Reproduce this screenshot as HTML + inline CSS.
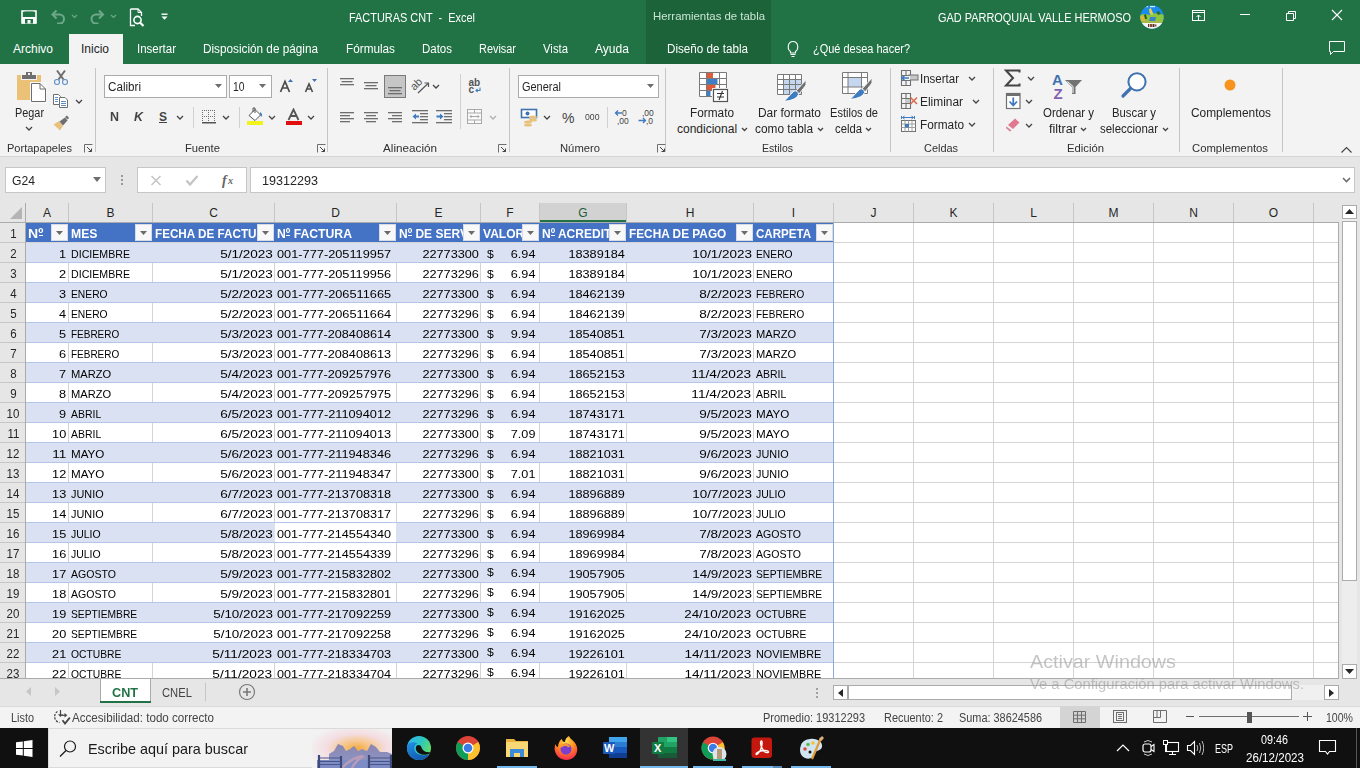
<!DOCTYPE html>
<html><head><meta charset="utf-8"><style>
html,body{margin:0;padding:0;}
body{width:1360px;height:768px;overflow:hidden;position:relative;background:#e6e6e6;font-family:"Liberation Sans",sans-serif;}
body div, body svg{position:absolute;}
</style></head><body>
<div style="left:0px;top:0px;width:1360px;height:64px;background:#217346"></div>
<div style="left:646px;top:0px;width:125px;height:64px;background:#1d6339"></div>
<div style="left:69px;top:34px;width:54px;height:30px;background:#f3f3f3"></div>
<div style="left:349.00px;top:10.84px;font-size:12px;line-height:14px;color:#ffffff;white-space:pre;font-family:'Liberation Sans', sans-serif;transform:scaleX(0.9100);transform-origin:left top;">FACTURAS CNT  -  Excel</div>
<div style="left:653.00px;top:9.69px;font-size:11px;line-height:13px;color:#c8e6d2;white-space:pre;font-family:'Liberation Sans', sans-serif;transform:scaleX(1.0349);transform-origin:left top;">Herramientas de tabla</div>
<div style="left:938.00px;top:10.84px;font-size:12px;line-height:14px;color:#ffffff;white-space:pre;font-family:'Liberation Sans', sans-serif;transform:scaleX(0.9111);transform-origin:left top;">GAD PARROQUIAL VALLE HERMOSO</div>
<div style="left:13.00px;top:41.84px;font-size:12px;line-height:14px;color:#ffffff;white-space:pre;font-family:'Liberation Sans', sans-serif;">Archivo</div>
<div style="left:137.00px;top:41.84px;font-size:12px;line-height:14px;color:#ffffff;white-space:pre;font-family:'Liberation Sans', sans-serif;transform:scaleX(0.9587);transform-origin:left top;">Insertar</div>
<div style="left:203.00px;top:41.84px;font-size:12px;line-height:14px;color:#ffffff;white-space:pre;font-family:'Liberation Sans', sans-serif;transform:scaleX(0.9795);transform-origin:left top;">Disposición de página</div>
<div style="left:346.00px;top:41.84px;font-size:12px;line-height:14px;color:#ffffff;white-space:pre;font-family:'Liberation Sans', sans-serif;transform:scaleX(0.9798);transform-origin:left top;">Fórmulas</div>
<div style="left:422.00px;top:41.84px;font-size:12px;line-height:14px;color:#ffffff;white-space:pre;font-family:'Liberation Sans', sans-serif;transform:scaleX(0.9570);transform-origin:left top;">Datos</div>
<div style="left:479.00px;top:41.84px;font-size:12px;line-height:14px;color:#ffffff;white-space:pre;font-family:'Liberation Sans', sans-serif;transform:scaleX(0.9096);transform-origin:left top;">Revisar</div>
<div style="left:543.00px;top:41.84px;font-size:12px;line-height:14px;color:#ffffff;white-space:pre;font-family:'Liberation Sans', sans-serif;transform:scaleX(0.9448);transform-origin:left top;">Vista</div>
<div style="left:595.00px;top:41.84px;font-size:12px;line-height:14px;color:#ffffff;white-space:pre;font-family:'Liberation Sans', sans-serif;transform:scaleX(1.0057);transform-origin:left top;">Ayuda</div>
<div style="left:667.00px;top:41.84px;font-size:12px;line-height:14px;color:#ffffff;white-space:pre;font-family:'Liberation Sans', sans-serif;transform:scaleX(0.9713);transform-origin:left top;">Diseño de tabla</div>
<div style="left:813.00px;top:41.84px;font-size:12px;line-height:14px;color:#ffffff;white-space:pre;font-family:'Liberation Sans', sans-serif;transform:scaleX(0.9145);transform-origin:left top;">¿Qué desea hacer?</div>
<div style="left:81.00px;top:41.84px;font-size:12px;line-height:14px;color:#262626;white-space:pre;font-family:'Liberation Sans', sans-serif;">Inicio</div>
<div style="left:0px;top:64px;width:1360px;height:92px;background:#f3f3f3"></div>
<div style="left:0px;top:156px;width:1360px;height:1px;background:#d6d6d6"></div>
<div style="left:95px;top:68px;width:1px;height:84px;background:#c6c6c6"></div>
<div style="left:327px;top:68px;width:1px;height:84px;background:#c6c6c6"></div>
<div style="left:509px;top:68px;width:1px;height:84px;background:#c6c6c6"></div>
<div style="left:665px;top:68px;width:1px;height:84px;background:#c6c6c6"></div>
<div style="left:890px;top:68px;width:1px;height:84px;background:#c6c6c6"></div>
<div style="left:993px;top:68px;width:1px;height:84px;background:#c6c6c6"></div>
<div style="left:1179px;top:68px;width:1px;height:84px;background:#c6c6c6"></div>
<div style="left:1282px;top:68px;width:1px;height:84px;background:#c6c6c6"></div>
<div style="left:7.00px;top:141.02px;font-size:11.5px;line-height:14px;color:#303030;white-space:pre;font-family:'Liberation Sans', sans-serif;transform:scaleX(0.9591);transform-origin:left top;">Portapapeles</div>
<div style="left:185.00px;top:141.02px;font-size:11.5px;line-height:14px;color:#303030;white-space:pre;font-family:'Liberation Sans', sans-serif;transform:scaleX(0.9776);transform-origin:left top;">Fuente</div>
<div style="left:383.00px;top:141.02px;font-size:11.5px;line-height:14px;color:#303030;white-space:pre;font-family:'Liberation Sans', sans-serif;transform:scaleX(1.0176);transform-origin:left top;">Alineación</div>
<div style="left:560.00px;top:141.02px;font-size:11.5px;line-height:14px;color:#303030;white-space:pre;font-family:'Liberation Sans', sans-serif;transform:scaleX(0.9780);transform-origin:left top;">Número</div>
<div style="left:762.00px;top:141.02px;font-size:11.5px;line-height:14px;color:#303030;white-space:pre;font-family:'Liberation Sans', sans-serif;transform:scaleX(0.9152);transform-origin:left top;">Estilos</div>
<div style="left:924.00px;top:141.02px;font-size:11.5px;line-height:14px;color:#303030;white-space:pre;font-family:'Liberation Sans', sans-serif;transform:scaleX(0.9498);transform-origin:left top;">Celdas</div>
<div style="left:1067.00px;top:141.02px;font-size:11.5px;line-height:14px;color:#303030;white-space:pre;font-family:'Liberation Sans', sans-serif;transform:scaleX(0.9810);transform-origin:left top;">Edición</div>
<div style="left:1192.00px;top:141.02px;font-size:11.5px;line-height:14px;color:#303030;white-space:pre;font-family:'Liberation Sans', sans-serif;transform:scaleX(0.9827);transform-origin:left top;">Complementos</div>
<svg style="left:15px;top:70px;" width="34" height="34" viewBox="0 0 34 34">
<rect x="2" y="5" width="24" height="25" fill="#ebc177"/>
<rect x="6" y="4" width="16" height="6" fill="#f3f3f3"/>
<rect x="7" y="5" width="14" height="4" fill="#6f6f6f"/>
<rect x="11" y="2" width="6" height="3" fill="#6f6f6f"/>
<rect x="13" y="3" width="2" height="2" fill="#f3f3f3"/>
<rect x="15" y="12" width="17" height="22" fill="#f7f7f7"/>
<path d="M16.5 13.5 H25 L30.5 19 V31.5 H16.5 Z" fill="#ffffff" stroke="#6d6d6d" stroke-width="1"/>
<path d="M25 13.5 V19 H30.5" fill="none" stroke="#6d6d6d" stroke-width="1"/>
</svg>
<div style="left:15.00px;top:105.84px;font-size:12px;line-height:14px;color:#262626;white-space:pre;font-family:'Liberation Sans', sans-serif;transform:scaleX(0.9056);transform-origin:left top;">Pegar</div>
<svg style="left:25px;top:126px;" width="8" height="5" viewBox="0 0 8 5"><path d="M1 1 L4.0 4 L7 1" fill="none" stroke="#444444" stroke-width="1.3"/></svg>
<svg style="left:52px;top:68px;" width="18" height="18" viewBox="0 0 18 18">
<path d="M5 2.5 L11.5 11.5 M13 2.5 L6.5 11.5" stroke="#6e6e6e" stroke-width="2"/>
<circle cx="5" cy="14" r="2.5" fill="#f3f3f3" stroke="#5b8fc9" stroke-width="1.1"/>
<circle cx="13" cy="14" r="2.5" fill="#f3f3f3" stroke="#5b8fc9" stroke-width="1.1"/>
</svg>
<svg style="left:52px;top:93px;" width="18" height="17" viewBox="0 0 18 17">
<path d="M1.5 1.5 H6.5 L8.5 3.5 V11.5 H1.5 Z" fill="#ffffff" stroke="#6e6e6e" stroke-width="1"/>
<path d="M3 4.5 H6 M3 6.5 H6 M3 8.5 H6" stroke="#5b8fc9" stroke-width="1"/>
<path d="M7.5 4.5 H13 L15.5 7 V14.5 H7.5 Z" fill="#ffffff" stroke="#6e6e6e" stroke-width="1"/>
<path d="M9 8.5 H14 M9 10.5 H14 M9 12.5 H14" stroke="#5b8fc9" stroke-width="1"/>
</svg>
<svg style="left:75px;top:99px;" width="8" height="5" viewBox="0 0 8 5"><path d="M1 1 L4.0 4 L7 1" fill="none" stroke="#444444" stroke-width="1.3"/></svg>
<svg style="left:52px;top:115px;" width="18" height="18" viewBox="0 0 18 18">
<path d="M1.5 9.5 L7 6 L11 11 L8 15.5 Z" fill="#e8c27c"/>
<path d="M7.5 6.5 L13 2.5 L15.5 5.5 L11 10.5 Z" fill="#6e6e6e"/>
<path d="M13 2 L15 0.5 L17 3 L15.5 4.5 Z" fill="#6e6e6e"/>
</svg>
<svg style="left:84px;top:144px;" width="9" height="9" viewBox="0 0 9 9"><path d="M0.5 8.5 V0.5 H8.5" fill="none" stroke="#6e6e6e" stroke-width="1"/><path d="M3 3 L7.5 7.5 M4.5 7.5 H7.5 V4.5" fill="none" stroke="#444" stroke-width="1"/></svg>
<svg style="left:317px;top:144px;" width="9" height="9" viewBox="0 0 9 9"><path d="M0.5 8.5 V0.5 H8.5" fill="none" stroke="#6e6e6e" stroke-width="1"/><path d="M3 3 L7.5 7.5 M4.5 7.5 H7.5 V4.5" fill="none" stroke="#444" stroke-width="1"/></svg>
<svg style="left:498px;top:144px;" width="9" height="9" viewBox="0 0 9 9"><path d="M0.5 8.5 V0.5 H8.5" fill="none" stroke="#6e6e6e" stroke-width="1"/><path d="M3 3 L7.5 7.5 M4.5 7.5 H7.5 V4.5" fill="none" stroke="#444" stroke-width="1"/></svg>
<svg style="left:657px;top:144px;" width="9" height="9" viewBox="0 0 9 9"><path d="M0.5 8.5 V0.5 H8.5" fill="none" stroke="#6e6e6e" stroke-width="1"/><path d="M3 3 L7.5 7.5 M4.5 7.5 H7.5 V4.5" fill="none" stroke="#444" stroke-width="1"/></svg>
<div style="left:104px;top:75px;width:123px;height:23px;background:#ffffff;border:1px solid #ababab;box-sizing:border-box"></div>
<div style="left:108.00px;top:79.84px;font-size:12px;line-height:14px;color:#262626;white-space:pre;font-family:'Liberation Sans', sans-serif;transform:scaleX(0.9704);transform-origin:left top;">Calibri</div>
<svg style="left:215px;top:84px;" width="7" height="4" viewBox="0 0 7 4"><path d="M0 0 H7 L3.5 4 Z" fill="#6e6e6e"/></svg>
<div style="left:229px;top:75px;width:43px;height:23px;background:#ffffff;border:1px solid #ababab;box-sizing:border-box"></div>
<div style="left:233.00px;top:79.84px;font-size:12px;line-height:14px;color:#262626;white-space:pre;font-family:'Liberation Sans', sans-serif;transform:scaleX(0.8616);transform-origin:left top;">10</div>
<svg style="left:259px;top:84px;" width="7" height="4" viewBox="0 0 7 4"><path d="M0 0 H7 L3.5 4 Z" fill="#6e6e6e"/></svg>
<svg style="left:278px;top:77px;" width="18" height="17" viewBox="0 0 18 17">
<path d="M2.5 15 L7 4.5 L11.5 15 M4.2 11 H9.8" fill="none" stroke="#4a4a4a" stroke-width="1.7"/>
<path d="M10 5 L12.5 2 L15 5 Z" fill="#3f6fb0"/>
</svg>
<svg style="left:303px;top:77px;" width="18" height="17" viewBox="0 0 18 17">
<path d="M2.5 15 L6 7 L9.5 15 M3.8 12 H8.2" fill="none" stroke="#4a4a4a" stroke-width="1.6"/>
<path d="M9 2 H14 L11.5 5 Z" fill="#3f6fb0"/>
</svg>
<div style="left:110.00px;top:109.84px;font-size:12px;line-height:14px;color:#444444;font-weight:bold;white-space:pre;font-family:'Liberation Sans', sans-serif;transform:scaleX(1.0385);transform-origin:left top;">N</div>
<div style="left:134.00px;top:109.84px;font-size:12px;line-height:14px;color:#444444;font-weight:bold;white-space:pre;font-family:'Liberation Sans', sans-serif;transform:scaleX(1.0385);transform-origin:left top;font-style:italic;">K</div>
<div style="left:159.00px;top:109.84px;font-size:12px;line-height:14px;color:#444444;font-weight:bold;white-space:pre;font-family:'Liberation Sans', sans-serif;">S</div>
<div style="left:159px;top:122px;width:8px;height:1px;background:#444444"></div>
<svg style="left:176px;top:115px;" width="8" height="5" viewBox="0 0 8 5"><path d="M1 1 L4.0 4 L7 1" fill="none" stroke="#444444" stroke-width="1.3"/></svg>
<div style="left:193px;top:107px;width:1px;height:21px;background:#d0d0d0"></div>
<svg style="left:201px;top:109px;" width="16" height="15" viewBox="0 0 16 15"><rect x="1" y="1" width="1" height="1" fill="#6e6e6e"/><rect x="1" y="3" width="1" height="1" fill="#6e6e6e"/><rect x="1" y="5" width="1" height="1" fill="#6e6e6e"/><rect x="1" y="7" width="1" height="1" fill="#6e6e6e"/><rect x="1" y="9" width="1" height="1" fill="#6e6e6e"/><rect x="1" y="11" width="1" height="1" fill="#6e6e6e"/><rect x="1" y="13" width="1" height="1" fill="#6e6e6e"/><rect x="3" y="1" width="1" height="1" fill="#6e6e6e"/><rect x="3" y="7" width="1" height="1" fill="#6e6e6e"/><rect x="5" y="1" width="1" height="1" fill="#6e6e6e"/><rect x="5" y="7" width="1" height="1" fill="#6e6e6e"/><rect x="7" y="1" width="1" height="1" fill="#6e6e6e"/><rect x="7" y="3" width="1" height="1" fill="#6e6e6e"/><rect x="7" y="5" width="1" height="1" fill="#6e6e6e"/><rect x="7" y="7" width="1" height="1" fill="#6e6e6e"/><rect x="7" y="9" width="1" height="1" fill="#6e6e6e"/><rect x="7" y="11" width="1" height="1" fill="#6e6e6e"/><rect x="7" y="13" width="1" height="1" fill="#6e6e6e"/><rect x="9" y="1" width="1" height="1" fill="#6e6e6e"/><rect x="9" y="7" width="1" height="1" fill="#6e6e6e"/><rect x="11" y="1" width="1" height="1" fill="#6e6e6e"/><rect x="11" y="7" width="1" height="1" fill="#6e6e6e"/><rect x="13" y="1" width="1" height="1" fill="#6e6e6e"/><rect x="13" y="3" width="1" height="1" fill="#6e6e6e"/><rect x="13" y="5" width="1" height="1" fill="#6e6e6e"/><rect x="13" y="7" width="1" height="1" fill="#6e6e6e"/><rect x="13" y="9" width="1" height="1" fill="#6e6e6e"/><rect x="13" y="11" width="1" height="1" fill="#6e6e6e"/><rect x="13" y="13" width="1" height="1" fill="#6e6e6e"/><rect x="1" y="13" width="14" height="1.5" fill="#555"/></svg>
<svg style="left:222px;top:115px;" width="8" height="5" viewBox="0 0 8 5"><path d="M1 1 L4.0 4 L7 1" fill="none" stroke="#444444" stroke-width="1.3"/></svg>
<div style="left:239px;top:107px;width:1px;height:21px;background:#d0d0d0"></div>
<svg style="left:245px;top:107px;" width="20" height="19" viewBox="0 0 20 19">
<path d="M4 8.5 L10 2.5 L15.5 8 L10 13.5 Z" fill="#ffffff" stroke="#555" stroke-width="1"/>
<path d="M8 5 V1 H10 V6" fill="none" stroke="#555" stroke-width="1"/>
<path d="M15 5 Q18 6.5 16.5 10 L15 8 Z" fill="#3f7bbf"/>
<rect x="2" y="14" width="16" height="4" fill="#f2f21c"/>
</svg>
<svg style="left:268px;top:115px;" width="8" height="5" viewBox="0 0 8 5"><path d="M1 1 L4.0 4 L7 1" fill="none" stroke="#444444" stroke-width="1.3"/></svg>
<svg style="left:284px;top:108px;" width="19" height="18" viewBox="0 0 19 18">
<path d="M4.5 12 L9.5 1.5 L14.5 12 M6.5 8 H12.5" fill="none" stroke="#555" stroke-width="1.8"/>
<rect x="2" y="13" width="16" height="4" fill="#e20e0e"/>
</svg>
<svg style="left:307px;top:115px;" width="8" height="5" viewBox="0 0 8 5"><path d="M1 1 L4.0 4 L7 1" fill="none" stroke="#444444" stroke-width="1.3"/></svg>
<svg style="left:340px;top:77px;" width="18" height="16" viewBox="0 0 18 16"><rect x="0" y="1" width="14" height="1.3" fill="#6e6e6e"/><rect x="1.5" y="4" width="11" height="1.3" fill="#6e6e6e"/><rect x="0" y="7" width="14" height="1.3" fill="#6e6e6e"/></svg>
<svg style="left:364px;top:81px;" width="18" height="16" viewBox="0 0 18 16"><rect x="0" y="1" width="14" height="1.3" fill="#6e6e6e"/><rect x="1.5" y="4" width="11" height="1.3" fill="#6e6e6e"/><rect x="0" y="7" width="14" height="1.3" fill="#6e6e6e"/></svg>
<div style="left:384px;top:75px;width:22px;height:23px;background:#c6c6c6;border:1px solid #7a7a7a;box-sizing:border-box"></div>
<svg style="left:388px;top:86px;" width="18" height="16" viewBox="0 0 18 16"><rect x="0" y="1" width="14" height="1.3" fill="#6e6e6e"/><rect x="1.5" y="4" width="11" height="1.3" fill="#6e6e6e"/><rect x="0" y="7" width="14" height="1.3" fill="#6e6e6e"/></svg>
<svg style="left:410px;top:76px;" width="20" height="20" viewBox="0 0 20 20">
<text x="0" y="0" transform="translate(4.5 15) rotate(-45)" font-family="Liberation Sans" font-size="11" fill="#555">ab</text>
<path d="M8 17 L18 7.5" stroke="#555" stroke-width="1.2"/>
<path d="M14.5 7 L18.5 7 L18.5 11" fill="none" stroke="#555" stroke-width="1.2"/>
</svg>
<svg style="left:432px;top:84px;" width="8" height="5" viewBox="0 0 8 5"><path d="M1 1 L4.0 4 L7 1" fill="none" stroke="#444444" stroke-width="1.3"/></svg>
<div style="left:460px;top:74px;width:1px;height:55px;background:#d0d0d0"></div>
<svg style="left:467px;top:77px;" width="16" height="18" viewBox="0 0 16 18">
<text x="1.5" y="8.5" font-family="Liberation Sans" font-size="10" font-weight="bold" fill="#555">ab</text>
<text x="1.5" y="15.5" font-family="Liberation Sans" font-size="10" font-weight="bold" fill="#555">c</text>
<path d="M13 10.5 V13.5 H9 M10.5 12 L9 13.5 L10.5 15" fill="none" stroke="#3f7bbf" stroke-width="1.1"/>
</svg>
<svg style="left:340px;top:111px;" width="18" height="16" viewBox="0 0 18 16"><rect x="0" y="1" width="14" height="1.3" fill="#6e6e6e"/><rect x="0" y="4" width="10" height="1.3" fill="#6e6e6e"/><rect x="0" y="7" width="14" height="1.3" fill="#6e6e6e"/><rect x="0" y="10" width="10" height="1.3" fill="#6e6e6e"/></svg>
<svg style="left:364px;top:111px;" width="18" height="16" viewBox="0 0 18 16"><rect x="0" y="1" width="14" height="1.3" fill="#6e6e6e"/><rect x="2" y="4" width="10" height="1.3" fill="#6e6e6e"/><rect x="0" y="7" width="14" height="1.3" fill="#6e6e6e"/><rect x="2" y="10" width="10" height="1.3" fill="#6e6e6e"/></svg>
<svg style="left:388px;top:111px;" width="18" height="16" viewBox="0 0 18 16"><rect x="0" y="1" width="14" height="1.3" fill="#6e6e6e"/><rect x="4" y="4" width="10" height="1.3" fill="#6e6e6e"/><rect x="0" y="7" width="14" height="1.3" fill="#6e6e6e"/><rect x="4" y="10" width="10" height="1.3" fill="#6e6e6e"/></svg>
<svg style="left:411px;top:109px;" width="18" height="15" viewBox="0 0 18 15">
<rect x="1" y="1" width="16" height="1.3" fill="#6e6e6e"/><rect x="9" y="4" width="8" height="1.3" fill="#6e6e6e"/>
<rect x="9" y="7" width="8" height="1.3" fill="#6e6e6e"/><rect x="9" y="10" width="8" height="1.3" fill="#6e6e6e"/>
<rect x="1" y="13" width="16" height="1.3" fill="#6e6e6e"/>
<path d="M1.5 7.5 L5 4.5 V6.5 H8 V8.5 H5 V10.5 Z" fill="#3f7bbf"/>
</svg>
<svg style="left:435px;top:109px;" width="18" height="15" viewBox="0 0 18 15">
<rect x="1" y="1" width="16" height="1.3" fill="#6e6e6e"/><rect x="9" y="4" width="8" height="1.3" fill="#6e6e6e"/>
<rect x="9" y="7" width="8" height="1.3" fill="#6e6e6e"/><rect x="9" y="10" width="8" height="1.3" fill="#6e6e6e"/>
<rect x="1" y="13" width="16" height="1.3" fill="#6e6e6e"/>
<path d="M8.5 7.5 L5 4.5 V6.5 H1.5 V8.5 H5 V10.5 Z" fill="#3f7bbf"/>
</svg>
<svg style="left:466px;top:108px;" width="18" height="17" viewBox="0 0 18 17">
<rect x="1.5" y="1.5" width="14" height="14" fill="#fafafa" stroke="#a8a8a8" stroke-width="1"/>
<path d="M1.5 5 H15.5 M1.5 12 H15.5 M8.5 1.5 V5 M8.5 12 V15.5" stroke="#a8a8a8" stroke-width="1"/>
<path d="M4 8.5 H13 M5.5 7 L4 8.5 L5.5 10 M11.5 7 L13 8.5 L11.5 10" fill="none" stroke="#a8a8a8" stroke-width="1"/>
</svg>
<svg style="left:489px;top:115px;" width="8" height="5" viewBox="0 0 8 5"><path d="M1 1 L4.0 4 L7 1" fill="none" stroke="#b0b0b0" stroke-width="1.3"/></svg>
<div style="left:518px;top:75px;width:141px;height:23px;background:#ffffff;border:1px solid #ababab;box-sizing:border-box"></div>
<div style="left:522.00px;top:79.84px;font-size:12px;line-height:14px;color:#262626;white-space:pre;font-family:'Liberation Sans', sans-serif;transform:scaleX(0.9135);transform-origin:left top;">General</div>
<svg style="left:647px;top:84px;" width="7" height="4" viewBox="0 0 7 4"><path d="M0 0 H7 L3.5 4 Z" fill="#6e6e6e"/></svg>
<svg style="left:519px;top:107px;" width="20" height="20" viewBox="0 0 20 20">
<rect x="2.5" y="2.5" width="15" height="8" fill="#ffffff" stroke="#3f72b0" stroke-width="1.6"/>
<circle cx="8.5" cy="6.5" r="2" fill="#3f72b0"/>
<ellipse cx="14" cy="10" rx="4" ry="1.6" fill="#e8c27c"/><ellipse cx="14" cy="13" rx="4" ry="1.6" fill="#e8c27c"/>
<ellipse cx="9" cy="15" rx="4" ry="1.6" fill="#e8c27c"/><ellipse cx="9" cy="18" rx="4" ry="1.6" fill="#e8c27c"/>
</svg>
<svg style="left:543px;top:115px;" width="8" height="5" viewBox="0 0 8 5"><path d="M1 1 L4.0 4 L7 1" fill="none" stroke="#444444" stroke-width="1.3"/></svg>
<div style="left:562.00px;top:109.65px;font-size:14px;line-height:17px;color:#444444;white-space:pre;font-family:'Liberation Sans', sans-serif;">%</div>
<div style="left:585.00px;top:111.21px;font-size:9.5px;line-height:11px;color:#444444;white-space:pre;font-family:'Liberation Sans', sans-serif;transform:scaleX(0.9148);transform-origin:left top;">000</div>
<div style="left:607px;top:107px;width:1px;height:21px;background:#d0d0d0"></div>
<svg style="left:613px;top:108px;" width="20" height="18" viewBox="0 0 20 18">
<text x="9" y="8" font-family="Liberation Sans" font-size="8.5" fill="#444">0</text>
<text x="4" y="15.5" font-family="Liberation Sans" font-size="8.5" fill="#444">,00</text>
<path d="M9 5 H2.5 M5 2.5 L2.5 5 L5 7.5" fill="none" stroke="#3f7bbf" stroke-width="1.3"/>
</svg>
<svg style="left:637px;top:108px;" width="20" height="18" viewBox="0 0 20 18">
<text x="5" y="8" font-family="Liberation Sans" font-size="8.5" fill="#444">,00</text>
<text x="9" y="15.5" font-family="Liberation Sans" font-size="8.5" fill="#444">,0</text>
<path d="M1.5 12.5 H8.5 M6 10 L8.5 12.5 L6 15" fill="none" stroke="#3f7bbf" stroke-width="1.3"/>
</svg>
<svg style="left:698px;top:71px;" width="32" height="32" viewBox="0 0 32 32">
<rect x="1.5" y="1.5" width="27" height="24" fill="#ffffff"/>
<rect x="8.5" y="1.5" width="6.5" height="6" fill="#e05a3a"/>
<rect x="8.5" y="7.5" width="11" height="6" fill="#3f7fc8"/>
<rect x="8.5" y="13.5" width="9" height="6" fill="#e05a3a"/>
<rect x="8.5" y="19.5" width="4" height="6" fill="#3f7fc8"/>
<path d="M1.5 1.5 H28.5 V25.5 H1.5 Z M1.5 7.5 H28.5 M1.5 13.5 H28.5 M1.5 19.5 H28.5 M8.5 1.5 V25.5 M21.5 1.5 V25.5" fill="none" stroke="#7a7a7a" stroke-width="1"/>
<rect x="14" y="17" width="17" height="14" fill="#f3f3f3"/>
<rect x="15.5" y="18.5" width="14" height="12" fill="#ffffff" stroke="#555" stroke-width="1.2"/>
<path d="M19 22.5 H26 M19 26 H26 M21 29 L24.5 20" stroke="#333" stroke-width="1.1"/>
</svg>
<div style="left:690.00px;top:105.84px;font-size:12px;line-height:14px;color:#262626;white-space:pre;font-family:'Liberation Sans', sans-serif;transform:scaleX(0.9848);transform-origin:left top;">Formato</div>
<div style="left:677.00px;top:121.84px;font-size:12px;line-height:14px;color:#262626;white-space:pre;font-family:'Liberation Sans', sans-serif;">condicional</div>
<svg style="left:741px;top:127px;" width="7" height="4.5" viewBox="0 0 7 4.5"><path d="M1 1 L3.5 3.5 L6 1" fill="none" stroke="#444" stroke-width="1.3"/></svg>
<svg style="left:775px;top:72px;" width="34" height="32" viewBox="0 0 34 32">
<rect x="2" y="2" width="25" height="21" fill="#ffffff"/>
<rect x="8.5" y="7.5" width="18.5" height="15.5" fill="#c5d7ee"/>
<path d="M2.5 2.5 H26.5 V22.5 H2.5 Z M2.5 7.5 H26.5 M2.5 12.5 H26.5 M2.5 17.5 H26.5 M8.5 2.5 V22.5 M14.5 2.5 V22.5 M20.5 2.5 V22.5" fill="none" stroke="#7a7a7a" stroke-width="1"/>
<path d="M31 8 L21 19 L24 22 L31 13 Z" fill="#707070" stroke="#f3f3f3" stroke-width="1"/>
<path d="M19 19 Q23 18 23.5 22.5 Q22 28 9 29.5 Q14 24 19 19 Z" fill="#3f7bbf" stroke="#ffffff" stroke-width="1"/>
</svg>
<div style="left:758.00px;top:105.84px;font-size:12px;line-height:14px;color:#262626;white-space:pre;font-family:'Liberation Sans', sans-serif;transform:scaleX(0.9944);transform-origin:left top;">Dar formato</div>
<div style="left:755.00px;top:121.84px;font-size:12px;line-height:14px;color:#262626;white-space:pre;font-family:'Liberation Sans', sans-serif;transform:scaleX(0.9881);transform-origin:left top;">como tabla</div>
<svg style="left:817px;top:127px;" width="7" height="4.5" viewBox="0 0 7 4.5"><path d="M1 1 L3.5 3.5 L6 1" fill="none" stroke="#444" stroke-width="1.3"/></svg>
<svg style="left:840px;top:70px;" width="34" height="32" viewBox="0 0 34 32">
<rect x="2" y="2" width="26" height="21" fill="#ffffff"/>
<rect x="8" y="7.5" width="13.5" height="9.5" fill="#c5d7ee"/>
<path d="M2.5 2.5 H27.5 V23.5 H2.5 Z M2.5 7.5 H27.5 M2.5 17 H27.5 M8 2.5 V23.5 M21.5 2.5 V23.5" fill="none" stroke="#7a7a7a" stroke-width="1"/>
<path d="M32 8 L22 19 L25 22 L32 13 Z" fill="#707070" stroke="#f3f3f3" stroke-width="1"/>
<path d="M20 19 Q24 18 24.5 22.5 Q23 28 10 29.5 Q15 24 20 19 Z" fill="#3f7bbf" stroke="#ffffff" stroke-width="1"/>
</svg>
<div style="left:830.00px;top:105.84px;font-size:12px;line-height:14px;color:#262626;white-space:pre;font-family:'Liberation Sans', sans-serif;transform:scaleX(0.9226);transform-origin:left top;">Estilos de</div>
<div style="left:835.00px;top:121.84px;font-size:12px;line-height:14px;color:#262626;white-space:pre;font-family:'Liberation Sans', sans-serif;transform:scaleX(0.9412);transform-origin:left top;">celda</div>
<svg style="left:865px;top:127px;" width="7" height="4.5" viewBox="0 0 7 4.5"><path d="M1 1 L3.5 3.5 L6 1" fill="none" stroke="#444" stroke-width="1.3"/></svg>
<svg style="left:900px;top:69px;" width="19" height="18" viewBox="0 0 19 18">
<path d="M1.5 1.5 H10.5 V16.5 H1.5 Z M1.5 6.5 H10.5 M1.5 11.5 H10.5 M6 1.5 V6.5 M6 11.5 V16.5" fill="none" stroke="#707070" stroke-width="1.1"/>
<rect x="9" y="6" width="9" height="5" fill="#c8c8c8" stroke="#707070" stroke-width="1"/>
<rect x="2" y="7" width="8" height="4" fill="#f3f3f3"/>
<path d="M2 9 H9 M4.5 6.5 L2 9 L4.5 11.5" fill="none" stroke="#3f7bbf" stroke-width="1.6"/>
</svg>
<div style="left:920.00px;top:71.84px;font-size:12px;line-height:14px;color:#262626;white-space:pre;font-family:'Liberation Sans', sans-serif;transform:scaleX(0.9587);transform-origin:left top;">Insertar</div>
<svg style="left:968px;top:76px;" width="8" height="5" viewBox="0 0 8 5"><path d="M1 1 L4.0 4 L7 1" fill="none" stroke="#444444" stroke-width="1.3"/></svg>
<svg style="left:900px;top:92px;" width="19" height="18" viewBox="0 0 19 18">
<path d="M1.5 1.5 H10.5 V16.5 H1.5 Z M1.5 6.5 H10.5 M1.5 11.5 H10.5 M6 1.5 V6.5 M6 11.5 V16.5" fill="none" stroke="#707070" stroke-width="1.1"/>
<rect x="5" y="7" width="5" height="4" fill="#c8c8c8"/>
<path d="M10.5 5.5 L17 12 M17 5.5 L10.5 12" stroke="#d9694a" stroke-width="1.5"/>
</svg>
<div style="left:920.00px;top:94.84px;font-size:12px;line-height:14px;color:#262626;white-space:pre;font-family:'Liberation Sans', sans-serif;transform:scaleX(0.9921);transform-origin:left top;">Eliminar</div>
<svg style="left:972px;top:99px;" width="8" height="5" viewBox="0 0 8 5"><path d="M1 1 L4.0 4 L7 1" fill="none" stroke="#444444" stroke-width="1.3"/></svg>
<svg style="left:900px;top:115px;" width="17" height="18" viewBox="0 0 17 18">
<path d="M1.5 1 V4 M14.5 1 V4 M2.5 2.5 H13.5 M4.5 1 L2.5 2.5 L4.5 4 M11.5 1 L13.5 2.5 L11.5 4" fill="none" stroke="#3f7bbf" stroke-width="1"/>
<rect x="1.5" y="5.5" width="14" height="11" fill="#ffffff" stroke="#707070" stroke-width="1"/>
<path d="M1.5 9 H15.5 M1.5 12.5 H15.5 M5 5.5 V16.5 M8.5 5.5 V16.5 M12 5.5 V16.5" stroke="#a0a0a0" stroke-width="1"/>
<rect x="5" y="9" width="4" height="3.5" fill="#3f7bbf"/>
</svg>
<div style="left:920.00px;top:117.84px;font-size:12px;line-height:14px;color:#262626;white-space:pre;font-family:'Liberation Sans', sans-serif;transform:scaleX(0.9848);transform-origin:left top;">Formato</div>
<svg style="left:968px;top:122px;" width="8" height="5" viewBox="0 0 8 5"><path d="M1 1 L4.0 4 L7 1" fill="none" stroke="#444444" stroke-width="1.3"/></svg>
<svg style="left:1003px;top:68px;" width="20" height="20" viewBox="0 0 20 20"><path d="M16.5 4.5 V2.5 H3 L10 10 L3 17.5 H16.5 V15.5" fill="none" stroke="#444" stroke-width="2"/></svg>
<svg style="left:1027px;top:76px;" width="8" height="5" viewBox="0 0 8 5"><path d="M1 1 L4.0 4 L7 1" fill="none" stroke="#444444" stroke-width="1.3"/></svg>
<svg style="left:1005px;top:92px;" width="17" height="18" viewBox="0 0 17 18">
<rect x="1.5" y="1.5" width="13.5" height="15" fill="#ffffff" stroke="#707070" stroke-width="1.2"/>
<rect x="1.5" y="1.5" width="13.5" height="2.5" fill="#707070"/>
<path d="M8.25 5.5 V13 M4.5 9.5 L8.25 13.5 L12 9.5" fill="none" stroke="#3f7bbf" stroke-width="1.8"/>
</svg>
<svg style="left:1025px;top:99px;" width="8" height="5" viewBox="0 0 8 5"><path d="M1 1 L4.0 4 L7 1" fill="none" stroke="#444444" stroke-width="1.3"/></svg>
<svg style="left:1005px;top:116px;" width="17" height="16" viewBox="0 0 17 16"><path d="M3 9 L10 2.5 L14.5 6.5 L8 13 Z" fill="#e07891"/><path d="M1.5 10.5 L6.5 14.5 L5 15.5 L1 12 Z" fill="#e07891"/></svg>
<svg style="left:1025px;top:123px;" width="8" height="5" viewBox="0 0 8 5"><path d="M1 1 L4.0 4 L7 1" fill="none" stroke="#444444" stroke-width="1.3"/></svg>
<svg style="left:1050px;top:71px;" width="36" height="31" viewBox="0 0 36 31">
<text x="2" y="13.5" font-family="Liberation Sans" font-size="15" font-weight="bold" fill="#3f72b0">A</text>
<text x="3.5" y="28" font-family="Liberation Sans" font-size="15" font-weight="bold" fill="#8660b0">Z</text>
<path d="M15 9 H32 L25.5 16 V23 H22 V16 Z" fill="#737373"/>
<path d="M17.5 10.5 L23 15.5 V22" fill="none" stroke="#ffffff" stroke-width="1"/>
</svg>
<div style="left:1043.00px;top:105.84px;font-size:12px;line-height:14px;color:#262626;white-space:pre;font-family:'Liberation Sans', sans-serif;transform:scaleX(0.9558);transform-origin:left top;">Ordenar y</div>
<div style="left:1049.00px;top:121.84px;font-size:12px;line-height:14px;color:#262626;white-space:pre;font-family:'Liberation Sans', sans-serif;transform:scaleX(1.0500);transform-origin:left top;">filtrar</div>
<svg style="left:1080px;top:127px;" width="7" height="4.5" viewBox="0 0 7 4.5"><path d="M1 1 L3.5 3.5 L6 1" fill="none" stroke="#444" stroke-width="1.3"/></svg>
<svg style="left:1118px;top:70px;" width="31" height="31" viewBox="0 0 31 31">
<circle cx="19" cy="11.8" r="8.6" fill="#ffffff" stroke="#3f72b0" stroke-width="2"/>
<path d="M12.5 18.5 L5 26" stroke="#3f72b0" stroke-width="3.2" stroke-linecap="round"/>
</svg>
<div style="left:1112.00px;top:105.84px;font-size:12px;line-height:14px;color:#262626;white-space:pre;font-family:'Liberation Sans', sans-serif;transform:scaleX(0.9425);transform-origin:left top;">Buscar y</div>
<div style="left:1100.00px;top:121.84px;font-size:12px;line-height:14px;color:#262626;white-space:pre;font-family:'Liberation Sans', sans-serif;transform:scaleX(0.9556);transform-origin:left top;">seleccionar</div>
<svg style="left:1162px;top:127px;" width="7" height="4.5" viewBox="0 0 7 4.5"><path d="M1 1 L3.5 3.5 L6 1" fill="none" stroke="#444" stroke-width="1.3"/></svg>
<svg style="left:1222px;top:77px;filter:blur(0.4px)" width="16" height="16" viewBox="0 0 16 16"><circle cx="8" cy="8" r="5.5" fill="#f7941d"/></svg>
<div style="left:1191.00px;top:105.84px;font-size:12px;line-height:14px;color:#262626;white-space:pre;font-family:'Liberation Sans', sans-serif;transform:scaleX(0.9913);transform-origin:left top;">Complementos</div>
<svg style="left:1340px;top:146px;" width="13" height="8" viewBox="0 0 13 8"><path d="M1.5 6.5 L6.5 1.5 L11.5 6.5" fill="none" stroke="#444" stroke-width="1.2"/></svg>
<div style="left:0px;top:157px;width:1360px;height:46px;background:#e6e6e6"></div>
<div style="left:5px;top:167px;width:101px;height:26px;background:#ffffff;border:1px solid #c6c6c6;box-sizing:border-box"></div>
<div style="left:12.00px;top:173.84px;font-size:12px;line-height:14px;color:#262626;white-space:pre;font-family:'Liberation Sans', sans-serif;transform:scaleX(1.0140);transform-origin:left top;">G24</div>
<div style="left:137px;top:167px;width:110px;height:26px;background:#ffffff;border:1px solid #c6c6c6;box-sizing:border-box"></div>
<div style="left:250px;top:167px;width:1105px;height:26px;background:#ffffff;border:1px solid #c6c6c6;box-sizing:border-box"></div>
<div style="left:262.00px;top:173.84px;font-size:12px;line-height:14px;color:#262626;white-space:pre;font-family:'Liberation Sans', sans-serif;transform:scaleX(1.0489);transform-origin:left top;">19312293</div>
<div style="left:26px;top:223px;width:1312px;height:455px;background:#ffffff"></div>
<div style="left:0px;top:203px;width:1338px;height:19px;background:#e6e6e6"></div>
<div style="left:0px;top:222px;width:1338px;height:1px;background:#ababab"></div>
<div style="left:539px;top:203px;width:87px;height:18px;background:#d2d2d2"></div>
<div style="left:539px;top:220px;width:88px;height:2px;background:#217346"></div>
<div style="left:68px;top:203px;width:1px;height:19px;background:#c6c6c6"></div>
<div style="left:43.00px;top:205.84px;font-size:12px;line-height:14px;color:#262626;white-space:pre;font-family:'Liberation Sans', sans-serif;">A</div>
<div style="left:152px;top:203px;width:1px;height:19px;background:#c6c6c6"></div>
<div style="left:106.50px;top:205.84px;font-size:12px;line-height:14px;color:#262626;white-space:pre;font-family:'Liberation Sans', sans-serif;">B</div>
<div style="left:274px;top:203px;width:1px;height:19px;background:#c6c6c6"></div>
<div style="left:209.17px;top:205.84px;font-size:12px;line-height:14px;color:#262626;white-space:pre;font-family:'Liberation Sans', sans-serif;">C</div>
<div style="left:396px;top:203px;width:1px;height:19px;background:#c6c6c6"></div>
<div style="left:331.17px;top:205.84px;font-size:12px;line-height:14px;color:#262626;white-space:pre;font-family:'Liberation Sans', sans-serif;">D</div>
<div style="left:480px;top:203px;width:1px;height:19px;background:#c6c6c6"></div>
<div style="left:434.50px;top:205.84px;font-size:12px;line-height:14px;color:#262626;white-space:pre;font-family:'Liberation Sans', sans-serif;">E</div>
<div style="left:539px;top:203px;width:1px;height:19px;background:#c6c6c6"></div>
<div style="left:506.33px;top:205.84px;font-size:12px;line-height:14px;color:#262626;white-space:pre;font-family:'Liberation Sans', sans-serif;">F</div>
<div style="left:626px;top:203px;width:1px;height:19px;background:#c6c6c6"></div>
<div style="left:578.33px;top:205.84px;font-size:12px;line-height:14px;color:#1e5c3a;white-space:pre;font-family:'Liberation Sans', sans-serif;">G</div>
<div style="left:753px;top:203px;width:1px;height:19px;background:#c6c6c6"></div>
<div style="left:685.67px;top:205.84px;font-size:12px;line-height:14px;color:#262626;white-space:pre;font-family:'Liberation Sans', sans-serif;">H</div>
<div style="left:833px;top:203px;width:1px;height:19px;background:#c6c6c6"></div>
<div style="left:791.83px;top:205.84px;font-size:12px;line-height:14px;color:#262626;white-space:pre;font-family:'Liberation Sans', sans-serif;">I</div>
<div style="left:913px;top:203px;width:1px;height:19px;background:#c6c6c6"></div>
<div style="left:870.50px;top:205.84px;font-size:12px;line-height:14px;color:#262626;white-space:pre;font-family:'Liberation Sans', sans-serif;">J</div>
<div style="left:993px;top:203px;width:1px;height:19px;background:#c6c6c6"></div>
<div style="left:949.50px;top:205.84px;font-size:12px;line-height:14px;color:#262626;white-space:pre;font-family:'Liberation Sans', sans-serif;">K</div>
<div style="left:1073px;top:203px;width:1px;height:19px;background:#c6c6c6"></div>
<div style="left:1030.16px;top:205.84px;font-size:12px;line-height:14px;color:#262626;white-space:pre;font-family:'Liberation Sans', sans-serif;">L</div>
<div style="left:1153px;top:203px;width:1px;height:19px;background:#c6c6c6"></div>
<div style="left:1108.50px;top:205.84px;font-size:12px;line-height:14px;color:#262626;white-space:pre;font-family:'Liberation Sans', sans-serif;">M</div>
<div style="left:1233px;top:203px;width:1px;height:19px;background:#c6c6c6"></div>
<div style="left:1189.17px;top:205.84px;font-size:12px;line-height:14px;color:#262626;white-space:pre;font-family:'Liberation Sans', sans-serif;">N</div>
<div style="left:1313px;top:203px;width:1px;height:19px;background:#c6c6c6"></div>
<div style="left:1268.83px;top:205.84px;font-size:12px;line-height:14px;color:#262626;white-space:pre;font-family:'Liberation Sans', sans-serif;">O</div>
<div style="left:0px;top:223px;width:25px;height:455px;background:#e6e6e6"></div>
<div style="left:25px;top:203px;width:1px;height:475px;background:#ababab"></div>
<svg style="left:9px;top:206px;" width="14" height="14" viewBox="0 0 14 14"><path d="M13 1 L13 13 L1 13 Z" fill="#b4b4b4"/></svg>
<div style="left:26px;top:242px;width:1312px;height:1px;background:#d4d4d4"></div>
<div style="left:0px;top:242px;width:25px;height:1px;background:#c6c6c6"></div>
<div style="left:26px;top:262px;width:1312px;height:1px;background:#d4d4d4"></div>
<div style="left:0px;top:262px;width:25px;height:1px;background:#c6c6c6"></div>
<div style="left:26px;top:282px;width:1312px;height:1px;background:#d4d4d4"></div>
<div style="left:0px;top:282px;width:25px;height:1px;background:#c6c6c6"></div>
<div style="left:26px;top:302px;width:1312px;height:1px;background:#d4d4d4"></div>
<div style="left:0px;top:302px;width:25px;height:1px;background:#c6c6c6"></div>
<div style="left:26px;top:322px;width:1312px;height:1px;background:#d4d4d4"></div>
<div style="left:0px;top:322px;width:25px;height:1px;background:#c6c6c6"></div>
<div style="left:26px;top:342px;width:1312px;height:1px;background:#d4d4d4"></div>
<div style="left:0px;top:342px;width:25px;height:1px;background:#c6c6c6"></div>
<div style="left:26px;top:362px;width:1312px;height:1px;background:#d4d4d4"></div>
<div style="left:0px;top:362px;width:25px;height:1px;background:#c6c6c6"></div>
<div style="left:26px;top:382px;width:1312px;height:1px;background:#d4d4d4"></div>
<div style="left:0px;top:382px;width:25px;height:1px;background:#c6c6c6"></div>
<div style="left:26px;top:402px;width:1312px;height:1px;background:#d4d4d4"></div>
<div style="left:0px;top:402px;width:25px;height:1px;background:#c6c6c6"></div>
<div style="left:26px;top:422px;width:1312px;height:1px;background:#d4d4d4"></div>
<div style="left:0px;top:422px;width:25px;height:1px;background:#c6c6c6"></div>
<div style="left:26px;top:442px;width:1312px;height:1px;background:#d4d4d4"></div>
<div style="left:0px;top:442px;width:25px;height:1px;background:#c6c6c6"></div>
<div style="left:26px;top:462px;width:1312px;height:1px;background:#d4d4d4"></div>
<div style="left:0px;top:462px;width:25px;height:1px;background:#c6c6c6"></div>
<div style="left:26px;top:482px;width:1312px;height:1px;background:#d4d4d4"></div>
<div style="left:0px;top:482px;width:25px;height:1px;background:#c6c6c6"></div>
<div style="left:26px;top:502px;width:1312px;height:1px;background:#d4d4d4"></div>
<div style="left:0px;top:502px;width:25px;height:1px;background:#c6c6c6"></div>
<div style="left:26px;top:522px;width:1312px;height:1px;background:#d4d4d4"></div>
<div style="left:0px;top:522px;width:25px;height:1px;background:#c6c6c6"></div>
<div style="left:26px;top:542px;width:1312px;height:1px;background:#d4d4d4"></div>
<div style="left:0px;top:542px;width:25px;height:1px;background:#c6c6c6"></div>
<div style="left:26px;top:562px;width:1312px;height:1px;background:#d4d4d4"></div>
<div style="left:0px;top:562px;width:25px;height:1px;background:#c6c6c6"></div>
<div style="left:26px;top:582px;width:1312px;height:1px;background:#d4d4d4"></div>
<div style="left:0px;top:582px;width:25px;height:1px;background:#c6c6c6"></div>
<div style="left:26px;top:602px;width:1312px;height:1px;background:#d4d4d4"></div>
<div style="left:0px;top:602px;width:25px;height:1px;background:#c6c6c6"></div>
<div style="left:26px;top:622px;width:1312px;height:1px;background:#d4d4d4"></div>
<div style="left:0px;top:622px;width:25px;height:1px;background:#c6c6c6"></div>
<div style="left:26px;top:642px;width:1312px;height:1px;background:#d4d4d4"></div>
<div style="left:0px;top:642px;width:25px;height:1px;background:#c6c6c6"></div>
<div style="left:26px;top:662px;width:1312px;height:1px;background:#d4d4d4"></div>
<div style="left:0px;top:662px;width:25px;height:1px;background:#c6c6c6"></div>
<div style="left:68px;top:223px;width:1px;height:455px;background:#d4d4d4"></div>
<div style="left:152px;top:223px;width:1px;height:455px;background:#d4d4d4"></div>
<div style="left:274px;top:223px;width:1px;height:455px;background:#d4d4d4"></div>
<div style="left:396px;top:223px;width:1px;height:455px;background:#d4d4d4"></div>
<div style="left:480px;top:223px;width:1px;height:455px;background:#d4d4d4"></div>
<div style="left:539px;top:223px;width:1px;height:455px;background:#d4d4d4"></div>
<div style="left:626px;top:223px;width:1px;height:455px;background:#d4d4d4"></div>
<div style="left:753px;top:223px;width:1px;height:455px;background:#d4d4d4"></div>
<div style="left:833px;top:223px;width:1px;height:455px;background:#d4d4d4"></div>
<div style="left:913px;top:223px;width:1px;height:455px;background:#d4d4d4"></div>
<div style="left:993px;top:223px;width:1px;height:455px;background:#d4d4d4"></div>
<div style="left:1073px;top:223px;width:1px;height:455px;background:#d4d4d4"></div>
<div style="left:1153px;top:223px;width:1px;height:455px;background:#d4d4d4"></div>
<div style="left:1233px;top:223px;width:1px;height:455px;background:#d4d4d4"></div>
<div style="left:1313px;top:223px;width:1px;height:455px;background:#d4d4d4"></div>
<div style="left:1338px;top:222px;width:1px;height:456px;background:#ababab"></div>
<div style="left:9.52px;top:226.67px;font-size:12.5px;line-height:15px;color:#262626;white-space:pre;font-family:'Liberation Sans', sans-serif;transform:scaleX(0.9200);transform-origin:center top;">1</div>
<div style="left:9.52px;top:246.67px;font-size:12.5px;line-height:15px;color:#262626;white-space:pre;font-family:'Liberation Sans', sans-serif;transform:scaleX(0.9200);transform-origin:center top;">2</div>
<div style="left:9.52px;top:266.67px;font-size:12.5px;line-height:15px;color:#262626;white-space:pre;font-family:'Liberation Sans', sans-serif;transform:scaleX(0.9200);transform-origin:center top;">3</div>
<div style="left:9.52px;top:286.67px;font-size:12.5px;line-height:15px;color:#262626;white-space:pre;font-family:'Liberation Sans', sans-serif;transform:scaleX(0.9200);transform-origin:center top;">4</div>
<div style="left:9.52px;top:306.67px;font-size:12.5px;line-height:15px;color:#262626;white-space:pre;font-family:'Liberation Sans', sans-serif;transform:scaleX(0.9200);transform-origin:center top;">5</div>
<div style="left:9.52px;top:326.67px;font-size:12.5px;line-height:15px;color:#262626;white-space:pre;font-family:'Liberation Sans', sans-serif;transform:scaleX(0.9200);transform-origin:center top;">6</div>
<div style="left:9.52px;top:346.67px;font-size:12.5px;line-height:15px;color:#262626;white-space:pre;font-family:'Liberation Sans', sans-serif;transform:scaleX(0.9200);transform-origin:center top;">7</div>
<div style="left:9.52px;top:366.67px;font-size:12.5px;line-height:15px;color:#262626;white-space:pre;font-family:'Liberation Sans', sans-serif;transform:scaleX(0.9200);transform-origin:center top;">8</div>
<div style="left:9.52px;top:386.67px;font-size:12.5px;line-height:15px;color:#262626;white-space:pre;font-family:'Liberation Sans', sans-serif;transform:scaleX(0.9200);transform-origin:center top;">9</div>
<div style="left:6.05px;top:406.67px;font-size:12.5px;line-height:15px;color:#262626;white-space:pre;font-family:'Liberation Sans', sans-serif;transform:scaleX(0.9200);transform-origin:center top;">10</div>
<div style="left:6.51px;top:426.67px;font-size:12.5px;line-height:15px;color:#262626;white-space:pre;font-family:'Liberation Sans', sans-serif;transform:scaleX(0.9200);transform-origin:center top;">11</div>
<div style="left:6.05px;top:446.67px;font-size:12.5px;line-height:15px;color:#262626;white-space:pre;font-family:'Liberation Sans', sans-serif;transform:scaleX(0.9200);transform-origin:center top;">12</div>
<div style="left:6.05px;top:466.67px;font-size:12.5px;line-height:15px;color:#262626;white-space:pre;font-family:'Liberation Sans', sans-serif;transform:scaleX(0.9200);transform-origin:center top;">13</div>
<div style="left:6.05px;top:486.67px;font-size:12.5px;line-height:15px;color:#262626;white-space:pre;font-family:'Liberation Sans', sans-serif;transform:scaleX(0.9200);transform-origin:center top;">14</div>
<div style="left:6.05px;top:506.67px;font-size:12.5px;line-height:15px;color:#262626;white-space:pre;font-family:'Liberation Sans', sans-serif;transform:scaleX(0.9200);transform-origin:center top;">15</div>
<div style="left:6.05px;top:526.67px;font-size:12.5px;line-height:15px;color:#262626;white-space:pre;font-family:'Liberation Sans', sans-serif;transform:scaleX(0.9200);transform-origin:center top;">16</div>
<div style="left:6.05px;top:546.67px;font-size:12.5px;line-height:15px;color:#262626;white-space:pre;font-family:'Liberation Sans', sans-serif;transform:scaleX(0.9200);transform-origin:center top;">17</div>
<div style="left:6.05px;top:566.67px;font-size:12.5px;line-height:15px;color:#262626;white-space:pre;font-family:'Liberation Sans', sans-serif;transform:scaleX(0.9200);transform-origin:center top;">18</div>
<div style="left:6.05px;top:586.67px;font-size:12.5px;line-height:15px;color:#262626;white-space:pre;font-family:'Liberation Sans', sans-serif;transform:scaleX(0.9200);transform-origin:center top;">19</div>
<div style="left:6.05px;top:606.67px;font-size:12.5px;line-height:15px;color:#262626;white-space:pre;font-family:'Liberation Sans', sans-serif;transform:scaleX(0.9200);transform-origin:center top;">20</div>
<div style="left:6.05px;top:626.67px;font-size:12.5px;line-height:15px;color:#262626;white-space:pre;font-family:'Liberation Sans', sans-serif;transform:scaleX(0.9200);transform-origin:center top;">21</div>
<div style="left:6.05px;top:646.67px;font-size:12.5px;line-height:15px;color:#262626;white-space:pre;font-family:'Liberation Sans', sans-serif;transform:scaleX(0.9200);transform-origin:center top;">22</div>
<div style="left:6.05px;top:666.67px;font-size:12.5px;line-height:15px;color:#262626;white-space:pre;font-family:'Liberation Sans', sans-serif;transform:scaleX(0.9200);transform-origin:center top;">23</div>
<div style="left:26px;top:223px;width:807px;height:19px;background:#4472c4"></div>
<div style="left:26px;top:223px;width:41px;height:19px;overflow:hidden">
<div style="left:2px;top:4.34px;font-size:12.0px;line-height:14px;color:#fff;font-weight:bold;white-space:pre;transform:scaleX(1.1700);transform-origin:left top">Nº</div></div>
<div style="left:51px;top:224px;width:17px;height:17px;background:#f8f8f8;border:1px solid #d6dbe6;box-sizing:border-box"></div>
<svg style="left:56px;top:231px;" width="7" height="4" viewBox="0 0 7 4"><path d="M0 0 L7 0 L3.5 4 Z" fill="#6a6a6a"/></svg>
<div style="left:38.64px;top:235px;width:4.13px;height:1.2px;background:#fff"></div>
<div style="left:69px;top:223px;width:82px;height:19px;overflow:hidden">
<div style="left:2px;top:4.34px;font-size:12.0px;line-height:14px;color:#fff;font-weight:bold;white-space:pre;transform:scaleX(1.0173);transform-origin:left top">MES</div></div>
<div style="left:135px;top:224px;width:17px;height:17px;background:#f8f8f8;border:1px solid #d6dbe6;box-sizing:border-box"></div>
<svg style="left:140px;top:231px;" width="7" height="4" viewBox="0 0 7 4"><path d="M0 0 L7 0 L3.5 4 Z" fill="#6a6a6a"/></svg>
<div style="left:153px;top:223px;width:120px;height:19px;overflow:hidden">
<div style="left:2px;top:4.34px;font-size:12.0px;line-height:14px;color:#fff;font-weight:bold;white-space:pre;transform:scaleX(0.9735);transform-origin:left top">FECHA DE FACTURA</div></div>
<div style="left:257px;top:224px;width:17px;height:17px;background:#f8f8f8;border:1px solid #d6dbe6;box-sizing:border-box"></div>
<svg style="left:262px;top:231px;" width="7" height="4" viewBox="0 0 7 4"><path d="M0 0 L7 0 L3.5 4 Z" fill="#6a6a6a"/></svg>
<div style="left:275px;top:223px;width:120px;height:19px;overflow:hidden">
<div style="left:2px;top:4.34px;font-size:12.0px;line-height:14px;color:#fff;font-weight:bold;white-space:pre;transform:scaleX(1.0176);transform-origin:left top">Nº FACTURA</div></div>
<div style="left:379px;top:224px;width:17px;height:17px;background:#f8f8f8;border:1px solid #d6dbe6;box-sizing:border-box"></div>
<svg style="left:384px;top:231px;" width="7" height="4" viewBox="0 0 7 4"><path d="M0 0 L7 0 L3.5 4 Z" fill="#6a6a6a"/></svg>
<div style="left:286.32px;top:235px;width:3.46px;height:1.2px;background:#fff"></div>
<div style="left:397px;top:223px;width:82px;height:19px;overflow:hidden">
<div style="left:2px;top:4.34px;font-size:12.0px;line-height:14px;color:#fff;font-weight:bold;white-space:pre;transform:scaleX(1.0018);transform-origin:left top">Nº DE SERVICIO</div></div>
<div style="left:463px;top:224px;width:17px;height:17px;background:#f8f8f8;border:1px solid #d6dbe6;box-sizing:border-box"></div>
<svg style="left:468px;top:231px;" width="7" height="4" viewBox="0 0 7 4"><path d="M0 0 L7 0 L3.5 4 Z" fill="#6a6a6a"/></svg>
<div style="left:408.18px;top:235px;width:3.39px;height:1.2px;background:#fff"></div>
<div style="left:481px;top:223px;width:57px;height:19px;overflow:hidden">
<div style="left:2px;top:4.34px;font-size:12.0px;line-height:14px;color:#fff;font-weight:bold;white-space:pre;transform:scaleX(1.0030);transform-origin:left top">VALOR</div></div>
<div style="left:522px;top:224px;width:17px;height:17px;background:#f8f8f8;border:1px solid #d6dbe6;box-sizing:border-box"></div>
<svg style="left:527px;top:231px;" width="7" height="4" viewBox="0 0 7 4"><path d="M0 0 L7 0 L3.5 4 Z" fill="#6a6a6a"/></svg>
<div style="left:540px;top:223px;width:85px;height:19px;overflow:hidden">
<div style="left:2px;top:4.34px;font-size:12.0px;line-height:14px;color:#fff;font-weight:bold;white-space:pre;transform:scaleX(1.0008);transform-origin:left top">Nº ACREDITACIÓN</div></div>
<div style="left:609px;top:224px;width:17px;height:17px;background:#f8f8f8;border:1px solid #d6dbe6;box-sizing:border-box"></div>
<svg style="left:614px;top:231px;" width="7" height="4" viewBox="0 0 7 4"><path d="M0 0 L7 0 L3.5 4 Z" fill="#6a6a6a"/></svg>
<div style="left:551.17px;top:235px;width:3.39px;height:1.2px;background:#fff"></div>
<div style="left:627px;top:223px;width:125px;height:19px;overflow:hidden">
<div style="left:2px;top:4.34px;font-size:12.0px;line-height:14px;color:#fff;font-weight:bold;white-space:pre;transform:scaleX(0.9860);transform-origin:left top">FECHA DE PAGO</div></div>
<div style="left:736px;top:224px;width:17px;height:17px;background:#f8f8f8;border:1px solid #d6dbe6;box-sizing:border-box"></div>
<svg style="left:741px;top:231px;" width="7" height="4" viewBox="0 0 7 4"><path d="M0 0 L7 0 L3.5 4 Z" fill="#6a6a6a"/></svg>
<div style="left:754px;top:223px;width:78px;height:19px;overflow:hidden">
<div style="left:2px;top:4.34px;font-size:12.0px;line-height:14px;color:#fff;font-weight:bold;white-space:pre;transform:scaleX(0.9641);transform-origin:left top">CARPETA</div></div>
<div style="left:816px;top:224px;width:17px;height:17px;background:#f8f8f8;border:1px solid #d6dbe6;box-sizing:border-box"></div>
<svg style="left:821px;top:231px;" width="7" height="4" viewBox="0 0 7 4"><path d="M0 0 L7 0 L3.5 4 Z" fill="#6a6a6a"/></svg>
<div style="left:26px;top:243px;width:807px;height:19px;background:#d9e1f2"></div>
<div style="left:26px;top:262px;width:807px;height:1px;background:#b4c6e7"></div>
<div style="left:59.88px;top:247.69px;font-size:11.0px;line-height:13px;color:#000000;white-space:pre;font-family:'Liberation Sans', sans-serif;transform:scaleX(1.1548);transform-origin:right top;">1</div>
<div style="left:71.00px;top:247.69px;font-size:11.0px;line-height:13px;color:#000000;white-space:pre;font-family:'Liberation Sans', sans-serif;transform:scaleX(0.9668);transform-origin:left top;">DICIEMBRE</div>
<div style="left:229.68px;top:247.69px;font-size:11.0px;line-height:13px;color:#000000;white-space:pre;font-family:'Liberation Sans', sans-serif;transform:scaleX(1.2303);transform-origin:right top;">5/1/2023</div>
<div style="left:277.00px;top:247.69px;font-size:11.0px;line-height:13px;color:#000000;white-space:pre;font-family:'Liberation Sans', sans-serif;transform:scaleX(1.1613);transform-origin:left top;">001-777-205119957</div>
<div style="left:429.56px;top:247.69px;font-size:11.0px;line-height:13px;color:#000000;white-space:pre;font-family:'Liberation Sans', sans-serif;transform:scaleX(1.1548);transform-origin:right top;">22773300</div>
<div style="left:486.50px;top:247.69px;font-size:11.0px;line-height:13px;color:#000000;white-space:pre;font-family:'Liberation Sans', sans-serif;transform:scaleX(1.1047);transform-origin:left top;">$</div>
<div style="left:513.59px;top:247.69px;font-size:11.0px;line-height:13px;color:#000000;white-space:pre;font-family:'Liberation Sans', sans-serif;transform:scaleX(1.1469);transform-origin:right top;">6.94</div>
<div style="left:575.56px;top:247.69px;font-size:11.0px;line-height:13px;color:#000000;white-space:pre;font-family:'Liberation Sans', sans-serif;transform:scaleX(1.1548);transform-origin:right top;">18389184</div>
<div style="left:702.56px;top:247.69px;font-size:11.0px;line-height:13px;color:#000000;white-space:pre;font-family:'Liberation Sans', sans-serif;transform:scaleX(1.2209);transform-origin:right top;">10/1/2023</div>
<div style="left:756.00px;top:247.69px;font-size:11.0px;line-height:13px;color:#000000;white-space:pre;font-family:'Liberation Sans', sans-serif;transform:scaleX(0.9344);transform-origin:left top;">ENERO</div>
<div style="left:26px;top:282px;width:807px;height:1px;background:#b4c6e7"></div>
<div style="left:59.88px;top:267.69px;font-size:11.0px;line-height:13px;color:#000000;white-space:pre;font-family:'Liberation Sans', sans-serif;transform:scaleX(1.1548);transform-origin:right top;">2</div>
<div style="left:71.00px;top:267.69px;font-size:11.0px;line-height:13px;color:#000000;white-space:pre;font-family:'Liberation Sans', sans-serif;transform:scaleX(0.9668);transform-origin:left top;">DICIEMBRE</div>
<div style="left:229.68px;top:267.69px;font-size:11.0px;line-height:13px;color:#000000;white-space:pre;font-family:'Liberation Sans', sans-serif;transform:scaleX(1.2303);transform-origin:right top;">5/1/2023</div>
<div style="left:277.00px;top:267.69px;font-size:11.0px;line-height:13px;color:#000000;white-space:pre;font-family:'Liberation Sans', sans-serif;transform:scaleX(1.1613);transform-origin:left top;">001-777-205119956</div>
<div style="left:429.56px;top:267.69px;font-size:11.0px;line-height:13px;color:#000000;white-space:pre;font-family:'Liberation Sans', sans-serif;transform:scaleX(1.1548);transform-origin:right top;">22773296</div>
<div style="left:486.50px;top:267.69px;font-size:11.0px;line-height:13px;color:#000000;white-space:pre;font-family:'Liberation Sans', sans-serif;transform:scaleX(1.1047);transform-origin:left top;">$</div>
<div style="left:513.59px;top:267.69px;font-size:11.0px;line-height:13px;color:#000000;white-space:pre;font-family:'Liberation Sans', sans-serif;transform:scaleX(1.1469);transform-origin:right top;">6.94</div>
<div style="left:575.56px;top:267.69px;font-size:11.0px;line-height:13px;color:#000000;white-space:pre;font-family:'Liberation Sans', sans-serif;transform:scaleX(1.1548);transform-origin:right top;">18389184</div>
<div style="left:702.56px;top:267.69px;font-size:11.0px;line-height:13px;color:#000000;white-space:pre;font-family:'Liberation Sans', sans-serif;transform:scaleX(1.2209);transform-origin:right top;">10/1/2023</div>
<div style="left:756.00px;top:267.69px;font-size:11.0px;line-height:13px;color:#000000;white-space:pre;font-family:'Liberation Sans', sans-serif;transform:scaleX(0.9344);transform-origin:left top;">ENERO</div>
<div style="left:26px;top:283px;width:807px;height:19px;background:#d9e1f2"></div>
<div style="left:26px;top:302px;width:807px;height:1px;background:#b4c6e7"></div>
<div style="left:59.88px;top:287.69px;font-size:11.0px;line-height:13px;color:#000000;white-space:pre;font-family:'Liberation Sans', sans-serif;transform:scaleX(1.1548);transform-origin:right top;">3</div>
<div style="left:71.00px;top:287.69px;font-size:11.0px;line-height:13px;color:#000000;white-space:pre;font-family:'Liberation Sans', sans-serif;transform:scaleX(0.9344);transform-origin:left top;">ENERO</div>
<div style="left:229.68px;top:287.69px;font-size:11.0px;line-height:13px;color:#000000;white-space:pre;font-family:'Liberation Sans', sans-serif;transform:scaleX(1.2303);transform-origin:right top;">5/2/2023</div>
<div style="left:277.00px;top:287.69px;font-size:11.0px;line-height:13px;color:#000000;white-space:pre;font-family:'Liberation Sans', sans-serif;transform:scaleX(1.1613);transform-origin:left top;">001-777-206511665</div>
<div style="left:429.56px;top:287.69px;font-size:11.0px;line-height:13px;color:#000000;white-space:pre;font-family:'Liberation Sans', sans-serif;transform:scaleX(1.1548);transform-origin:right top;">22773300</div>
<div style="left:486.50px;top:287.69px;font-size:11.0px;line-height:13px;color:#000000;white-space:pre;font-family:'Liberation Sans', sans-serif;transform:scaleX(1.1047);transform-origin:left top;">$</div>
<div style="left:513.59px;top:287.69px;font-size:11.0px;line-height:13px;color:#000000;white-space:pre;font-family:'Liberation Sans', sans-serif;transform:scaleX(1.1469);transform-origin:right top;">6.94</div>
<div style="left:575.56px;top:287.69px;font-size:11.0px;line-height:13px;color:#000000;white-space:pre;font-family:'Liberation Sans', sans-serif;transform:scaleX(1.1548);transform-origin:right top;">18462139</div>
<div style="left:708.68px;top:287.69px;font-size:11.0px;line-height:13px;color:#000000;white-space:pre;font-family:'Liberation Sans', sans-serif;transform:scaleX(1.2303);transform-origin:right top;">8/2/2023</div>
<div style="left:756.00px;top:287.69px;font-size:11.0px;line-height:13px;color:#000000;white-space:pre;font-family:'Liberation Sans', sans-serif;transform:scaleX(0.9063);transform-origin:left top;">FEBRERO</div>
<div style="left:26px;top:322px;width:807px;height:1px;background:#b4c6e7"></div>
<div style="left:59.88px;top:307.69px;font-size:11.0px;line-height:13px;color:#000000;white-space:pre;font-family:'Liberation Sans', sans-serif;transform:scaleX(1.1548);transform-origin:right top;">4</div>
<div style="left:71.00px;top:307.69px;font-size:11.0px;line-height:13px;color:#000000;white-space:pre;font-family:'Liberation Sans', sans-serif;transform:scaleX(0.9344);transform-origin:left top;">ENERO</div>
<div style="left:229.68px;top:307.69px;font-size:11.0px;line-height:13px;color:#000000;white-space:pre;font-family:'Liberation Sans', sans-serif;transform:scaleX(1.2303);transform-origin:right top;">5/2/2023</div>
<div style="left:277.00px;top:307.69px;font-size:11.0px;line-height:13px;color:#000000;white-space:pre;font-family:'Liberation Sans', sans-serif;transform:scaleX(1.1613);transform-origin:left top;">001-777-206511664</div>
<div style="left:429.56px;top:307.69px;font-size:11.0px;line-height:13px;color:#000000;white-space:pre;font-family:'Liberation Sans', sans-serif;transform:scaleX(1.1548);transform-origin:right top;">22773296</div>
<div style="left:486.50px;top:307.69px;font-size:11.0px;line-height:13px;color:#000000;white-space:pre;font-family:'Liberation Sans', sans-serif;transform:scaleX(1.1047);transform-origin:left top;">$</div>
<div style="left:513.59px;top:307.69px;font-size:11.0px;line-height:13px;color:#000000;white-space:pre;font-family:'Liberation Sans', sans-serif;transform:scaleX(1.1469);transform-origin:right top;">6.94</div>
<div style="left:575.56px;top:307.69px;font-size:11.0px;line-height:13px;color:#000000;white-space:pre;font-family:'Liberation Sans', sans-serif;transform:scaleX(1.1548);transform-origin:right top;">18462139</div>
<div style="left:708.68px;top:307.69px;font-size:11.0px;line-height:13px;color:#000000;white-space:pre;font-family:'Liberation Sans', sans-serif;transform:scaleX(1.2303);transform-origin:right top;">8/2/2023</div>
<div style="left:756.00px;top:307.69px;font-size:11.0px;line-height:13px;color:#000000;white-space:pre;font-family:'Liberation Sans', sans-serif;transform:scaleX(0.9063);transform-origin:left top;">FEBRERO</div>
<div style="left:26px;top:323px;width:807px;height:19px;background:#d9e1f2"></div>
<div style="left:26px;top:342px;width:807px;height:1px;background:#b4c6e7"></div>
<div style="left:59.88px;top:327.69px;font-size:11.0px;line-height:13px;color:#000000;white-space:pre;font-family:'Liberation Sans', sans-serif;transform:scaleX(1.1548);transform-origin:right top;">5</div>
<div style="left:71.00px;top:327.69px;font-size:11.0px;line-height:13px;color:#000000;white-space:pre;font-family:'Liberation Sans', sans-serif;transform:scaleX(0.9063);transform-origin:left top;">FEBRERO</div>
<div style="left:229.68px;top:327.69px;font-size:11.0px;line-height:13px;color:#000000;white-space:pre;font-family:'Liberation Sans', sans-serif;transform:scaleX(1.2303);transform-origin:right top;">5/3/2023</div>
<div style="left:277.00px;top:327.69px;font-size:11.0px;line-height:13px;color:#000000;white-space:pre;font-family:'Liberation Sans', sans-serif;transform:scaleX(1.1518);transform-origin:left top;">001-777-208408614</div>
<div style="left:429.56px;top:327.69px;font-size:11.0px;line-height:13px;color:#000000;white-space:pre;font-family:'Liberation Sans', sans-serif;transform:scaleX(1.1548);transform-origin:right top;">22773300</div>
<div style="left:486.50px;top:327.69px;font-size:11.0px;line-height:13px;color:#000000;white-space:pre;font-family:'Liberation Sans', sans-serif;transform:scaleX(1.1047);transform-origin:left top;">$</div>
<div style="left:513.59px;top:327.69px;font-size:11.0px;line-height:13px;color:#000000;white-space:pre;font-family:'Liberation Sans', sans-serif;transform:scaleX(1.1469);transform-origin:right top;">9.94</div>
<div style="left:575.56px;top:327.69px;font-size:11.0px;line-height:13px;color:#000000;white-space:pre;font-family:'Liberation Sans', sans-serif;transform:scaleX(1.1548);transform-origin:right top;">18540851</div>
<div style="left:708.68px;top:327.69px;font-size:11.0px;line-height:13px;color:#000000;white-space:pre;font-family:'Liberation Sans', sans-serif;transform:scaleX(1.2303);transform-origin:right top;">7/3/2023</div>
<div style="left:756.00px;top:327.69px;font-size:11.0px;line-height:13px;color:#000000;white-space:pre;font-family:'Liberation Sans', sans-serif;transform:scaleX(1.0114);transform-origin:left top;">MARZO</div>
<div style="left:26px;top:362px;width:807px;height:1px;background:#b4c6e7"></div>
<div style="left:59.88px;top:347.69px;font-size:11.0px;line-height:13px;color:#000000;white-space:pre;font-family:'Liberation Sans', sans-serif;transform:scaleX(1.1548);transform-origin:right top;">6</div>
<div style="left:71.00px;top:347.69px;font-size:11.0px;line-height:13px;color:#000000;white-space:pre;font-family:'Liberation Sans', sans-serif;transform:scaleX(0.9063);transform-origin:left top;">FEBRERO</div>
<div style="left:229.68px;top:347.69px;font-size:11.0px;line-height:13px;color:#000000;white-space:pre;font-family:'Liberation Sans', sans-serif;transform:scaleX(1.2303);transform-origin:right top;">5/3/2023</div>
<div style="left:277.00px;top:347.69px;font-size:11.0px;line-height:13px;color:#000000;white-space:pre;font-family:'Liberation Sans', sans-serif;transform:scaleX(1.1518);transform-origin:left top;">001-777-208408613</div>
<div style="left:429.56px;top:347.69px;font-size:11.0px;line-height:13px;color:#000000;white-space:pre;font-family:'Liberation Sans', sans-serif;transform:scaleX(1.1548);transform-origin:right top;">22773296</div>
<div style="left:486.50px;top:347.69px;font-size:11.0px;line-height:13px;color:#000000;white-space:pre;font-family:'Liberation Sans', sans-serif;transform:scaleX(1.1047);transform-origin:left top;">$</div>
<div style="left:513.59px;top:347.69px;font-size:11.0px;line-height:13px;color:#000000;white-space:pre;font-family:'Liberation Sans', sans-serif;transform:scaleX(1.1469);transform-origin:right top;">6.94</div>
<div style="left:575.56px;top:347.69px;font-size:11.0px;line-height:13px;color:#000000;white-space:pre;font-family:'Liberation Sans', sans-serif;transform:scaleX(1.1548);transform-origin:right top;">18540851</div>
<div style="left:708.68px;top:347.69px;font-size:11.0px;line-height:13px;color:#000000;white-space:pre;font-family:'Liberation Sans', sans-serif;transform:scaleX(1.2303);transform-origin:right top;">7/3/2023</div>
<div style="left:756.00px;top:347.69px;font-size:11.0px;line-height:13px;color:#000000;white-space:pre;font-family:'Liberation Sans', sans-serif;transform:scaleX(1.0114);transform-origin:left top;">MARZO</div>
<div style="left:26px;top:363px;width:807px;height:19px;background:#d9e1f2"></div>
<div style="left:26px;top:382px;width:807px;height:1px;background:#b4c6e7"></div>
<div style="left:59.88px;top:367.69px;font-size:11.0px;line-height:13px;color:#000000;white-space:pre;font-family:'Liberation Sans', sans-serif;transform:scaleX(1.1548);transform-origin:right top;">7</div>
<div style="left:71.00px;top:367.69px;font-size:11.0px;line-height:13px;color:#000000;white-space:pre;font-family:'Liberation Sans', sans-serif;transform:scaleX(1.0114);transform-origin:left top;">MARZO</div>
<div style="left:229.68px;top:367.69px;font-size:11.0px;line-height:13px;color:#000000;white-space:pre;font-family:'Liberation Sans', sans-serif;transform:scaleX(1.2303);transform-origin:right top;">5/4/2023</div>
<div style="left:277.00px;top:367.69px;font-size:11.0px;line-height:13px;color:#000000;white-space:pre;font-family:'Liberation Sans', sans-serif;transform:scaleX(1.1518);transform-origin:left top;">001-777-209257976</div>
<div style="left:429.56px;top:367.69px;font-size:11.0px;line-height:13px;color:#000000;white-space:pre;font-family:'Liberation Sans', sans-serif;transform:scaleX(1.1548);transform-origin:right top;">22773300</div>
<div style="left:486.50px;top:367.69px;font-size:11.0px;line-height:13px;color:#000000;white-space:pre;font-family:'Liberation Sans', sans-serif;transform:scaleX(1.1047);transform-origin:left top;">$</div>
<div style="left:513.59px;top:367.69px;font-size:11.0px;line-height:13px;color:#000000;white-space:pre;font-family:'Liberation Sans', sans-serif;transform:scaleX(1.1469);transform-origin:right top;">6.94</div>
<div style="left:575.56px;top:367.69px;font-size:11.0px;line-height:13px;color:#000000;white-space:pre;font-family:'Liberation Sans', sans-serif;transform:scaleX(1.1548);transform-origin:right top;">18652153</div>
<div style="left:703.38px;top:367.69px;font-size:11.0px;line-height:13px;color:#000000;white-space:pre;font-family:'Liberation Sans', sans-serif;transform:scaleX(1.2416);transform-origin:right top;">11/4/2023</div>
<div style="left:756.00px;top:367.69px;font-size:11.0px;line-height:13px;color:#000000;white-space:pre;font-family:'Liberation Sans', sans-serif;transform:scaleX(0.9509);transform-origin:left top;">ABRIL</div>
<div style="left:26px;top:402px;width:807px;height:1px;background:#b4c6e7"></div>
<div style="left:59.88px;top:387.69px;font-size:11.0px;line-height:13px;color:#000000;white-space:pre;font-family:'Liberation Sans', sans-serif;transform:scaleX(1.1548);transform-origin:right top;">8</div>
<div style="left:71.00px;top:387.69px;font-size:11.0px;line-height:13px;color:#000000;white-space:pre;font-family:'Liberation Sans', sans-serif;transform:scaleX(1.0114);transform-origin:left top;">MARZO</div>
<div style="left:229.68px;top:387.69px;font-size:11.0px;line-height:13px;color:#000000;white-space:pre;font-family:'Liberation Sans', sans-serif;transform:scaleX(1.2303);transform-origin:right top;">5/4/2023</div>
<div style="left:277.00px;top:387.69px;font-size:11.0px;line-height:13px;color:#000000;white-space:pre;font-family:'Liberation Sans', sans-serif;transform:scaleX(1.1518);transform-origin:left top;">001-777-209257975</div>
<div style="left:429.56px;top:387.69px;font-size:11.0px;line-height:13px;color:#000000;white-space:pre;font-family:'Liberation Sans', sans-serif;transform:scaleX(1.1548);transform-origin:right top;">22773296</div>
<div style="left:486.50px;top:387.69px;font-size:11.0px;line-height:13px;color:#000000;white-space:pre;font-family:'Liberation Sans', sans-serif;transform:scaleX(1.1047);transform-origin:left top;">$</div>
<div style="left:513.59px;top:387.69px;font-size:11.0px;line-height:13px;color:#000000;white-space:pre;font-family:'Liberation Sans', sans-serif;transform:scaleX(1.1469);transform-origin:right top;">6.94</div>
<div style="left:575.56px;top:387.69px;font-size:11.0px;line-height:13px;color:#000000;white-space:pre;font-family:'Liberation Sans', sans-serif;transform:scaleX(1.1548);transform-origin:right top;">18652153</div>
<div style="left:703.38px;top:387.69px;font-size:11.0px;line-height:13px;color:#000000;white-space:pre;font-family:'Liberation Sans', sans-serif;transform:scaleX(1.2416);transform-origin:right top;">11/4/2023</div>
<div style="left:756.00px;top:387.69px;font-size:11.0px;line-height:13px;color:#000000;white-space:pre;font-family:'Liberation Sans', sans-serif;transform:scaleX(0.9509);transform-origin:left top;">ABRIL</div>
<div style="left:26px;top:403px;width:807px;height:19px;background:#d9e1f2"></div>
<div style="left:26px;top:422px;width:807px;height:1px;background:#b4c6e7"></div>
<div style="left:59.88px;top:407.69px;font-size:11.0px;line-height:13px;color:#000000;white-space:pre;font-family:'Liberation Sans', sans-serif;transform:scaleX(1.1548);transform-origin:right top;">9</div>
<div style="left:71.00px;top:407.69px;font-size:11.0px;line-height:13px;color:#000000;white-space:pre;font-family:'Liberation Sans', sans-serif;transform:scaleX(0.9509);transform-origin:left top;">ABRIL</div>
<div style="left:229.68px;top:407.69px;font-size:11.0px;line-height:13px;color:#000000;white-space:pre;font-family:'Liberation Sans', sans-serif;transform:scaleX(1.2303);transform-origin:right top;">6/5/2023</div>
<div style="left:277.00px;top:407.69px;font-size:11.0px;line-height:13px;color:#000000;white-space:pre;font-family:'Liberation Sans', sans-serif;transform:scaleX(1.1613);transform-origin:left top;">001-777-211094012</div>
<div style="left:429.56px;top:407.69px;font-size:11.0px;line-height:13px;color:#000000;white-space:pre;font-family:'Liberation Sans', sans-serif;transform:scaleX(1.1548);transform-origin:right top;">22773296</div>
<div style="left:486.50px;top:407.69px;font-size:11.0px;line-height:13px;color:#000000;white-space:pre;font-family:'Liberation Sans', sans-serif;transform:scaleX(1.1047);transform-origin:left top;">$</div>
<div style="left:513.59px;top:407.69px;font-size:11.0px;line-height:13px;color:#000000;white-space:pre;font-family:'Liberation Sans', sans-serif;transform:scaleX(1.1469);transform-origin:right top;">6.94</div>
<div style="left:575.56px;top:407.69px;font-size:11.0px;line-height:13px;color:#000000;white-space:pre;font-family:'Liberation Sans', sans-serif;transform:scaleX(1.1548);transform-origin:right top;">18743171</div>
<div style="left:708.68px;top:407.69px;font-size:11.0px;line-height:13px;color:#000000;white-space:pre;font-family:'Liberation Sans', sans-serif;transform:scaleX(1.2303);transform-origin:right top;">9/5/2023</div>
<div style="left:756.00px;top:407.69px;font-size:11.0px;line-height:13px;color:#000000;white-space:pre;font-family:'Liberation Sans', sans-serif;transform:scaleX(1.0577);transform-origin:left top;">MAYO</div>
<div style="left:26px;top:442px;width:807px;height:1px;background:#b4c6e7"></div>
<div style="left:53.76px;top:427.69px;font-size:11.0px;line-height:13px;color:#000000;white-space:pre;font-family:'Liberation Sans', sans-serif;transform:scaleX(1.1548);transform-origin:right top;">10</div>
<div style="left:71.00px;top:427.69px;font-size:11.0px;line-height:13px;color:#000000;white-space:pre;font-family:'Liberation Sans', sans-serif;transform:scaleX(0.9509);transform-origin:left top;">ABRIL</div>
<div style="left:229.68px;top:427.69px;font-size:11.0px;line-height:13px;color:#000000;white-space:pre;font-family:'Liberation Sans', sans-serif;transform:scaleX(1.2303);transform-origin:right top;">6/5/2023</div>
<div style="left:277.00px;top:427.69px;font-size:11.0px;line-height:13px;color:#000000;white-space:pre;font-family:'Liberation Sans', sans-serif;transform:scaleX(1.1613);transform-origin:left top;">001-777-211094013</div>
<div style="left:429.56px;top:427.69px;font-size:11.0px;line-height:13px;color:#000000;white-space:pre;font-family:'Liberation Sans', sans-serif;transform:scaleX(1.1548);transform-origin:right top;">22773300</div>
<div style="left:486.50px;top:427.69px;font-size:11.0px;line-height:13px;color:#000000;white-space:pre;font-family:'Liberation Sans', sans-serif;transform:scaleX(1.1047);transform-origin:left top;">$</div>
<div style="left:513.59px;top:427.69px;font-size:11.0px;line-height:13px;color:#000000;white-space:pre;font-family:'Liberation Sans', sans-serif;transform:scaleX(1.1469);transform-origin:right top;">7.09</div>
<div style="left:575.56px;top:427.69px;font-size:11.0px;line-height:13px;color:#000000;white-space:pre;font-family:'Liberation Sans', sans-serif;transform:scaleX(1.1548);transform-origin:right top;">18743171</div>
<div style="left:708.68px;top:427.69px;font-size:11.0px;line-height:13px;color:#000000;white-space:pre;font-family:'Liberation Sans', sans-serif;transform:scaleX(1.2303);transform-origin:right top;">9/5/2023</div>
<div style="left:756.00px;top:427.69px;font-size:11.0px;line-height:13px;color:#000000;white-space:pre;font-family:'Liberation Sans', sans-serif;transform:scaleX(1.0577);transform-origin:left top;">MAYO</div>
<div style="left:26px;top:443px;width:807px;height:19px;background:#d9e1f2"></div>
<div style="left:26px;top:462px;width:807px;height:1px;background:#b4c6e7"></div>
<div style="left:54.58px;top:447.69px;font-size:11.0px;line-height:13px;color:#000000;white-space:pre;font-family:'Liberation Sans', sans-serif;transform:scaleX(1.2374);transform-origin:right top;">11</div>
<div style="left:71.00px;top:447.69px;font-size:11.0px;line-height:13px;color:#000000;white-space:pre;font-family:'Liberation Sans', sans-serif;transform:scaleX(1.0577);transform-origin:left top;">MAYO</div>
<div style="left:229.68px;top:447.69px;font-size:11.0px;line-height:13px;color:#000000;white-space:pre;font-family:'Liberation Sans', sans-serif;transform:scaleX(1.2303);transform-origin:right top;">5/6/2023</div>
<div style="left:277.00px;top:447.69px;font-size:11.0px;line-height:13px;color:#000000;white-space:pre;font-family:'Liberation Sans', sans-serif;transform:scaleX(1.1613);transform-origin:left top;">001-777-211948346</div>
<div style="left:429.56px;top:447.69px;font-size:11.0px;line-height:13px;color:#000000;white-space:pre;font-family:'Liberation Sans', sans-serif;transform:scaleX(1.1548);transform-origin:right top;">22773296</div>
<div style="left:486.50px;top:447.69px;font-size:11.0px;line-height:13px;color:#000000;white-space:pre;font-family:'Liberation Sans', sans-serif;transform:scaleX(1.1047);transform-origin:left top;">$</div>
<div style="left:513.59px;top:447.69px;font-size:11.0px;line-height:13px;color:#000000;white-space:pre;font-family:'Liberation Sans', sans-serif;transform:scaleX(1.1469);transform-origin:right top;">6.94</div>
<div style="left:575.56px;top:447.69px;font-size:11.0px;line-height:13px;color:#000000;white-space:pre;font-family:'Liberation Sans', sans-serif;transform:scaleX(1.1548);transform-origin:right top;">18821031</div>
<div style="left:708.68px;top:447.69px;font-size:11.0px;line-height:13px;color:#000000;white-space:pre;font-family:'Liberation Sans', sans-serif;transform:scaleX(1.2303);transform-origin:right top;">9/6/2023</div>
<div style="left:756.00px;top:447.69px;font-size:11.0px;line-height:13px;color:#000000;white-space:pre;font-family:'Liberation Sans', sans-serif;transform:scaleX(0.9878);transform-origin:left top;">JUNIO</div>
<div style="left:26px;top:482px;width:807px;height:1px;background:#b4c6e7"></div>
<div style="left:53.76px;top:467.69px;font-size:11.0px;line-height:13px;color:#000000;white-space:pre;font-family:'Liberation Sans', sans-serif;transform:scaleX(1.1548);transform-origin:right top;">12</div>
<div style="left:71.00px;top:467.69px;font-size:11.0px;line-height:13px;color:#000000;white-space:pre;font-family:'Liberation Sans', sans-serif;transform:scaleX(1.0577);transform-origin:left top;">MAYO</div>
<div style="left:229.68px;top:467.69px;font-size:11.0px;line-height:13px;color:#000000;white-space:pre;font-family:'Liberation Sans', sans-serif;transform:scaleX(1.2303);transform-origin:right top;">5/6/2023</div>
<div style="left:277.00px;top:467.69px;font-size:11.0px;line-height:13px;color:#000000;white-space:pre;font-family:'Liberation Sans', sans-serif;transform:scaleX(1.1613);transform-origin:left top;">001-777-211948347</div>
<div style="left:429.56px;top:467.69px;font-size:11.0px;line-height:13px;color:#000000;white-space:pre;font-family:'Liberation Sans', sans-serif;transform:scaleX(1.1548);transform-origin:right top;">22773300</div>
<div style="left:486.50px;top:467.69px;font-size:11.0px;line-height:13px;color:#000000;white-space:pre;font-family:'Liberation Sans', sans-serif;transform:scaleX(1.1047);transform-origin:left top;">$</div>
<div style="left:513.59px;top:467.69px;font-size:11.0px;line-height:13px;color:#000000;white-space:pre;font-family:'Liberation Sans', sans-serif;transform:scaleX(1.1469);transform-origin:right top;">7.01</div>
<div style="left:575.56px;top:467.69px;font-size:11.0px;line-height:13px;color:#000000;white-space:pre;font-family:'Liberation Sans', sans-serif;transform:scaleX(1.1548);transform-origin:right top;">18821031</div>
<div style="left:708.68px;top:467.69px;font-size:11.0px;line-height:13px;color:#000000;white-space:pre;font-family:'Liberation Sans', sans-serif;transform:scaleX(1.2303);transform-origin:right top;">9/6/2023</div>
<div style="left:756.00px;top:467.69px;font-size:11.0px;line-height:13px;color:#000000;white-space:pre;font-family:'Liberation Sans', sans-serif;transform:scaleX(0.9878);transform-origin:left top;">JUNIO</div>
<div style="left:26px;top:483px;width:807px;height:19px;background:#d9e1f2"></div>
<div style="left:26px;top:502px;width:807px;height:1px;background:#b4c6e7"></div>
<div style="left:53.76px;top:487.69px;font-size:11.0px;line-height:13px;color:#000000;white-space:pre;font-family:'Liberation Sans', sans-serif;transform:scaleX(1.1548);transform-origin:right top;">13</div>
<div style="left:71.00px;top:487.69px;font-size:11.0px;line-height:13px;color:#000000;white-space:pre;font-family:'Liberation Sans', sans-serif;transform:scaleX(0.9878);transform-origin:left top;">JUNIO</div>
<div style="left:229.68px;top:487.69px;font-size:11.0px;line-height:13px;color:#000000;white-space:pre;font-family:'Liberation Sans', sans-serif;transform:scaleX(1.2303);transform-origin:right top;">6/7/2023</div>
<div style="left:277.00px;top:487.69px;font-size:11.0px;line-height:13px;color:#000000;white-space:pre;font-family:'Liberation Sans', sans-serif;transform:scaleX(1.1518);transform-origin:left top;">001-777-213708318</div>
<div style="left:429.56px;top:487.69px;font-size:11.0px;line-height:13px;color:#000000;white-space:pre;font-family:'Liberation Sans', sans-serif;transform:scaleX(1.1548);transform-origin:right top;">22773300</div>
<div style="left:486.50px;top:487.69px;font-size:11.0px;line-height:13px;color:#000000;white-space:pre;font-family:'Liberation Sans', sans-serif;transform:scaleX(1.1047);transform-origin:left top;">$</div>
<div style="left:513.59px;top:487.69px;font-size:11.0px;line-height:13px;color:#000000;white-space:pre;font-family:'Liberation Sans', sans-serif;transform:scaleX(1.1469);transform-origin:right top;">6.94</div>
<div style="left:575.56px;top:487.69px;font-size:11.0px;line-height:13px;color:#000000;white-space:pre;font-family:'Liberation Sans', sans-serif;transform:scaleX(1.1548);transform-origin:right top;">18896889</div>
<div style="left:702.56px;top:487.69px;font-size:11.0px;line-height:13px;color:#000000;white-space:pre;font-family:'Liberation Sans', sans-serif;transform:scaleX(1.2209);transform-origin:right top;">10/7/2023</div>
<div style="left:756.00px;top:487.69px;font-size:11.0px;line-height:13px;color:#000000;white-space:pre;font-family:'Liberation Sans', sans-serif;transform:scaleX(0.9519);transform-origin:left top;">JULIO</div>
<div style="left:26px;top:522px;width:807px;height:1px;background:#b4c6e7"></div>
<div style="left:53.76px;top:507.69px;font-size:11.0px;line-height:13px;color:#000000;white-space:pre;font-family:'Liberation Sans', sans-serif;transform:scaleX(1.1548);transform-origin:right top;">14</div>
<div style="left:71.00px;top:507.69px;font-size:11.0px;line-height:13px;color:#000000;white-space:pre;font-family:'Liberation Sans', sans-serif;transform:scaleX(0.9878);transform-origin:left top;">JUNIO</div>
<div style="left:229.68px;top:507.69px;font-size:11.0px;line-height:13px;color:#000000;white-space:pre;font-family:'Liberation Sans', sans-serif;transform:scaleX(1.2303);transform-origin:right top;">6/7/2023</div>
<div style="left:277.00px;top:507.69px;font-size:11.0px;line-height:13px;color:#000000;white-space:pre;font-family:'Liberation Sans', sans-serif;transform:scaleX(1.1518);transform-origin:left top;">001-777-213708317</div>
<div style="left:429.56px;top:507.69px;font-size:11.0px;line-height:13px;color:#000000;white-space:pre;font-family:'Liberation Sans', sans-serif;transform:scaleX(1.1548);transform-origin:right top;">22773296</div>
<div style="left:486.50px;top:507.69px;font-size:11.0px;line-height:13px;color:#000000;white-space:pre;font-family:'Liberation Sans', sans-serif;transform:scaleX(1.1047);transform-origin:left top;">$</div>
<div style="left:513.59px;top:507.69px;font-size:11.0px;line-height:13px;color:#000000;white-space:pre;font-family:'Liberation Sans', sans-serif;transform:scaleX(1.1469);transform-origin:right top;">6.94</div>
<div style="left:575.56px;top:507.69px;font-size:11.0px;line-height:13px;color:#000000;white-space:pre;font-family:'Liberation Sans', sans-serif;transform:scaleX(1.1548);transform-origin:right top;">18896889</div>
<div style="left:702.56px;top:507.69px;font-size:11.0px;line-height:13px;color:#000000;white-space:pre;font-family:'Liberation Sans', sans-serif;transform:scaleX(1.2209);transform-origin:right top;">10/7/2023</div>
<div style="left:756.00px;top:507.69px;font-size:11.0px;line-height:13px;color:#000000;white-space:pre;font-family:'Liberation Sans', sans-serif;transform:scaleX(0.9519);transform-origin:left top;">JULIO</div>
<div style="left:26px;top:523px;width:807px;height:19px;background:#d9e1f2"></div>
<div style="left:275px;top:523px;width:121px;height:19px;background:#ffffff"></div>
<div style="left:26px;top:542px;width:807px;height:1px;background:#b4c6e7"></div>
<div style="left:53.76px;top:527.69px;font-size:11.0px;line-height:13px;color:#000000;white-space:pre;font-family:'Liberation Sans', sans-serif;transform:scaleX(1.1548);transform-origin:right top;">15</div>
<div style="left:71.00px;top:527.69px;font-size:11.0px;line-height:13px;color:#000000;white-space:pre;font-family:'Liberation Sans', sans-serif;transform:scaleX(0.9519);transform-origin:left top;">JULIO</div>
<div style="left:229.68px;top:527.69px;font-size:11.0px;line-height:13px;color:#000000;white-space:pre;font-family:'Liberation Sans', sans-serif;transform:scaleX(1.2303);transform-origin:right top;">5/8/2023</div>
<div style="left:277.00px;top:527.69px;font-size:11.0px;line-height:13px;color:#000000;white-space:pre;font-family:'Liberation Sans', sans-serif;transform:scaleX(1.1518);transform-origin:left top;">001-777-214554340</div>
<div style="left:429.56px;top:527.69px;font-size:11.0px;line-height:13px;color:#000000;white-space:pre;font-family:'Liberation Sans', sans-serif;transform:scaleX(1.1548);transform-origin:right top;">22773300</div>
<div style="left:486.50px;top:527.69px;font-size:11.0px;line-height:13px;color:#000000;white-space:pre;font-family:'Liberation Sans', sans-serif;transform:scaleX(1.1047);transform-origin:left top;">$</div>
<div style="left:513.59px;top:527.69px;font-size:11.0px;line-height:13px;color:#000000;white-space:pre;font-family:'Liberation Sans', sans-serif;transform:scaleX(1.1469);transform-origin:right top;">6.94</div>
<div style="left:575.56px;top:527.69px;font-size:11.0px;line-height:13px;color:#000000;white-space:pre;font-family:'Liberation Sans', sans-serif;transform:scaleX(1.1548);transform-origin:right top;">18969984</div>
<div style="left:708.68px;top:527.69px;font-size:11.0px;line-height:13px;color:#000000;white-space:pre;font-family:'Liberation Sans', sans-serif;transform:scaleX(1.2303);transform-origin:right top;">7/8/2023</div>
<div style="left:756.00px;top:527.69px;font-size:11.0px;line-height:13px;color:#000000;white-space:pre;font-family:'Liberation Sans', sans-serif;transform:scaleX(0.9602);transform-origin:left top;">AGOSTO</div>
<div style="left:26px;top:562px;width:807px;height:1px;background:#b4c6e7"></div>
<div style="left:53.76px;top:547.69px;font-size:11.0px;line-height:13px;color:#000000;white-space:pre;font-family:'Liberation Sans', sans-serif;transform:scaleX(1.1548);transform-origin:right top;">16</div>
<div style="left:71.00px;top:547.69px;font-size:11.0px;line-height:13px;color:#000000;white-space:pre;font-family:'Liberation Sans', sans-serif;transform:scaleX(0.9519);transform-origin:left top;">JULIO</div>
<div style="left:229.68px;top:547.69px;font-size:11.0px;line-height:13px;color:#000000;white-space:pre;font-family:'Liberation Sans', sans-serif;transform:scaleX(1.2303);transform-origin:right top;">5/8/2023</div>
<div style="left:277.00px;top:547.69px;font-size:11.0px;line-height:13px;color:#000000;white-space:pre;font-family:'Liberation Sans', sans-serif;transform:scaleX(1.1518);transform-origin:left top;">001-777-214554339</div>
<div style="left:429.56px;top:547.69px;font-size:11.0px;line-height:13px;color:#000000;white-space:pre;font-family:'Liberation Sans', sans-serif;transform:scaleX(1.1548);transform-origin:right top;">22773296</div>
<div style="left:486.50px;top:547.69px;font-size:11.0px;line-height:13px;color:#000000;white-space:pre;font-family:'Liberation Sans', sans-serif;transform:scaleX(1.1047);transform-origin:left top;">$</div>
<div style="left:513.59px;top:547.69px;font-size:11.0px;line-height:13px;color:#000000;white-space:pre;font-family:'Liberation Sans', sans-serif;transform:scaleX(1.1469);transform-origin:right top;">6.94</div>
<div style="left:575.56px;top:547.69px;font-size:11.0px;line-height:13px;color:#000000;white-space:pre;font-family:'Liberation Sans', sans-serif;transform:scaleX(1.1548);transform-origin:right top;">18969984</div>
<div style="left:708.68px;top:547.69px;font-size:11.0px;line-height:13px;color:#000000;white-space:pre;font-family:'Liberation Sans', sans-serif;transform:scaleX(1.2303);transform-origin:right top;">7/8/2023</div>
<div style="left:756.00px;top:547.69px;font-size:11.0px;line-height:13px;color:#000000;white-space:pre;font-family:'Liberation Sans', sans-serif;transform:scaleX(0.9602);transform-origin:left top;">AGOSTO</div>
<div style="left:26px;top:563px;width:807px;height:19px;background:#d9e1f2"></div>
<div style="left:26px;top:582px;width:807px;height:1px;background:#b4c6e7"></div>
<div style="left:53.76px;top:567.69px;font-size:11.0px;line-height:13px;color:#000000;white-space:pre;font-family:'Liberation Sans', sans-serif;transform:scaleX(1.1548);transform-origin:right top;">17</div>
<div style="left:71.00px;top:567.69px;font-size:11.0px;line-height:13px;color:#000000;white-space:pre;font-family:'Liberation Sans', sans-serif;transform:scaleX(0.9602);transform-origin:left top;">AGOSTO</div>
<div style="left:229.68px;top:567.69px;font-size:11.0px;line-height:13px;color:#000000;white-space:pre;font-family:'Liberation Sans', sans-serif;transform:scaleX(1.2303);transform-origin:right top;">5/9/2023</div>
<div style="left:277.00px;top:567.69px;font-size:11.0px;line-height:13px;color:#000000;white-space:pre;font-family:'Liberation Sans', sans-serif;transform:scaleX(1.1518);transform-origin:left top;">001-777-215832802</div>
<div style="left:429.56px;top:567.69px;font-size:11.0px;line-height:13px;color:#000000;white-space:pre;font-family:'Liberation Sans', sans-serif;transform:scaleX(1.1548);transform-origin:right top;">22773300</div>
<div style="left:486.50px;top:565.69px;font-size:11.0px;line-height:13px;color:#000000;white-space:pre;font-family:'Liberation Sans', sans-serif;transform:scaleX(1.1047);transform-origin:left top;">$</div>
<div style="left:513.59px;top:566.69px;font-size:11.0px;line-height:13px;color:#000000;white-space:pre;font-family:'Liberation Sans', sans-serif;transform:scaleX(1.1469);transform-origin:right top;">6.94</div>
<div style="left:575.56px;top:567.69px;font-size:11.0px;line-height:13px;color:#000000;white-space:pre;font-family:'Liberation Sans', sans-serif;transform:scaleX(1.1548);transform-origin:right top;">19057905</div>
<div style="left:702.56px;top:567.69px;font-size:11.0px;line-height:13px;color:#000000;white-space:pre;font-family:'Liberation Sans', sans-serif;transform:scaleX(1.2209);transform-origin:right top;">14/9/2023</div>
<div style="left:756.00px;top:567.69px;font-size:11.0px;line-height:13px;color:#000000;white-space:pre;font-family:'Liberation Sans', sans-serif;transform:scaleX(0.9339);transform-origin:left top;">SEPTIEMBRE</div>
<div style="left:26px;top:602px;width:807px;height:1px;background:#b4c6e7"></div>
<div style="left:53.76px;top:587.69px;font-size:11.0px;line-height:13px;color:#000000;white-space:pre;font-family:'Liberation Sans', sans-serif;transform:scaleX(1.1548);transform-origin:right top;">18</div>
<div style="left:71.00px;top:587.69px;font-size:11.0px;line-height:13px;color:#000000;white-space:pre;font-family:'Liberation Sans', sans-serif;transform:scaleX(0.9602);transform-origin:left top;">AGOSTO</div>
<div style="left:229.68px;top:587.69px;font-size:11.0px;line-height:13px;color:#000000;white-space:pre;font-family:'Liberation Sans', sans-serif;transform:scaleX(1.2303);transform-origin:right top;">5/9/2023</div>
<div style="left:277.00px;top:587.69px;font-size:11.0px;line-height:13px;color:#000000;white-space:pre;font-family:'Liberation Sans', sans-serif;transform:scaleX(1.1518);transform-origin:left top;">001-777-215832801</div>
<div style="left:429.56px;top:587.69px;font-size:11.0px;line-height:13px;color:#000000;white-space:pre;font-family:'Liberation Sans', sans-serif;transform:scaleX(1.1548);transform-origin:right top;">22773296</div>
<div style="left:486.50px;top:585.69px;font-size:11.0px;line-height:13px;color:#000000;white-space:pre;font-family:'Liberation Sans', sans-serif;transform:scaleX(1.1047);transform-origin:left top;">$</div>
<div style="left:513.59px;top:586.69px;font-size:11.0px;line-height:13px;color:#000000;white-space:pre;font-family:'Liberation Sans', sans-serif;transform:scaleX(1.1469);transform-origin:right top;">6.94</div>
<div style="left:575.56px;top:587.69px;font-size:11.0px;line-height:13px;color:#000000;white-space:pre;font-family:'Liberation Sans', sans-serif;transform:scaleX(1.1548);transform-origin:right top;">19057905</div>
<div style="left:702.56px;top:587.69px;font-size:11.0px;line-height:13px;color:#000000;white-space:pre;font-family:'Liberation Sans', sans-serif;transform:scaleX(1.2209);transform-origin:right top;">14/9/2023</div>
<div style="left:756.00px;top:587.69px;font-size:11.0px;line-height:13px;color:#000000;white-space:pre;font-family:'Liberation Sans', sans-serif;transform:scaleX(0.9339);transform-origin:left top;">SEPTIEMBRE</div>
<div style="left:26px;top:603px;width:807px;height:19px;background:#d9e1f2"></div>
<div style="left:26px;top:622px;width:807px;height:1px;background:#b4c6e7"></div>
<div style="left:53.76px;top:607.69px;font-size:11.0px;line-height:13px;color:#000000;white-space:pre;font-family:'Liberation Sans', sans-serif;transform:scaleX(1.1548);transform-origin:right top;">19</div>
<div style="left:71.00px;top:607.69px;font-size:11.0px;line-height:13px;color:#000000;white-space:pre;font-family:'Liberation Sans', sans-serif;transform:scaleX(0.9339);transform-origin:left top;">SEPTIEMBRE</div>
<div style="left:223.56px;top:607.69px;font-size:11.0px;line-height:13px;color:#000000;white-space:pre;font-family:'Liberation Sans', sans-serif;transform:scaleX(1.2209);transform-origin:right top;">5/10/2023</div>
<div style="left:277.00px;top:607.69px;font-size:11.0px;line-height:13px;color:#000000;white-space:pre;font-family:'Liberation Sans', sans-serif;transform:scaleX(1.1518);transform-origin:left top;">001-777-217092259</div>
<div style="left:429.56px;top:607.69px;font-size:11.0px;line-height:13px;color:#000000;white-space:pre;font-family:'Liberation Sans', sans-serif;transform:scaleX(1.1548);transform-origin:right top;">22773300</div>
<div style="left:486.50px;top:605.69px;font-size:11.0px;line-height:13px;color:#000000;white-space:pre;font-family:'Liberation Sans', sans-serif;transform:scaleX(1.1047);transform-origin:left top;">$</div>
<div style="left:513.59px;top:606.69px;font-size:11.0px;line-height:13px;color:#000000;white-space:pre;font-family:'Liberation Sans', sans-serif;transform:scaleX(1.1469);transform-origin:right top;">6.94</div>
<div style="left:575.56px;top:607.69px;font-size:11.0px;line-height:13px;color:#000000;white-space:pre;font-family:'Liberation Sans', sans-serif;transform:scaleX(1.1548);transform-origin:right top;">19162025</div>
<div style="left:696.45px;top:607.69px;font-size:11.0px;line-height:13px;color:#000000;white-space:pre;font-family:'Liberation Sans', sans-serif;transform:scaleX(1.2135);transform-origin:right top;">24/10/2023</div>
<div style="left:756.00px;top:607.69px;font-size:11.0px;line-height:13px;color:#000000;white-space:pre;font-family:'Liberation Sans', sans-serif;transform:scaleX(0.9374);transform-origin:left top;">OCTUBRE</div>
<div style="left:26px;top:623px;width:807px;height:19px;background:#ffffff"></div>
<div style="left:26px;top:642px;width:807px;height:1px;background:#b4c6e7"></div>
<div style="left:53.76px;top:627.69px;font-size:11.0px;line-height:13px;color:#000000;white-space:pre;font-family:'Liberation Sans', sans-serif;transform:scaleX(1.1548);transform-origin:right top;">20</div>
<div style="left:71.00px;top:627.69px;font-size:11.0px;line-height:13px;color:#000000;white-space:pre;font-family:'Liberation Sans', sans-serif;transform:scaleX(0.9339);transform-origin:left top;">SEPTIEMBRE</div>
<div style="left:223.56px;top:627.69px;font-size:11.0px;line-height:13px;color:#000000;white-space:pre;font-family:'Liberation Sans', sans-serif;transform:scaleX(1.2209);transform-origin:right top;">5/10/2023</div>
<div style="left:277.00px;top:627.69px;font-size:11.0px;line-height:13px;color:#000000;white-space:pre;font-family:'Liberation Sans', sans-serif;transform:scaleX(1.1518);transform-origin:left top;">001-777-217092258</div>
<div style="left:429.56px;top:627.69px;font-size:11.0px;line-height:13px;color:#000000;white-space:pre;font-family:'Liberation Sans', sans-serif;transform:scaleX(1.1548);transform-origin:right top;">22773296</div>
<div style="left:486.50px;top:625.69px;font-size:11.0px;line-height:13px;color:#000000;white-space:pre;font-family:'Liberation Sans', sans-serif;transform:scaleX(1.1047);transform-origin:left top;">$</div>
<div style="left:513.59px;top:626.69px;font-size:11.0px;line-height:13px;color:#000000;white-space:pre;font-family:'Liberation Sans', sans-serif;transform:scaleX(1.1469);transform-origin:right top;">6.94</div>
<div style="left:575.56px;top:627.69px;font-size:11.0px;line-height:13px;color:#000000;white-space:pre;font-family:'Liberation Sans', sans-serif;transform:scaleX(1.1548);transform-origin:right top;">19162025</div>
<div style="left:696.45px;top:627.69px;font-size:11.0px;line-height:13px;color:#000000;white-space:pre;font-family:'Liberation Sans', sans-serif;transform:scaleX(1.2135);transform-origin:right top;">24/10/2023</div>
<div style="left:756.00px;top:627.69px;font-size:11.0px;line-height:13px;color:#000000;white-space:pre;font-family:'Liberation Sans', sans-serif;transform:scaleX(0.9374);transform-origin:left top;">OCTUBRE</div>
<div style="left:26px;top:643px;width:807px;height:19px;background:#d9e1f2"></div>
<div style="left:26px;top:662px;width:807px;height:1px;background:#b4c6e7"></div>
<div style="left:53.76px;top:647.69px;font-size:11.0px;line-height:13px;color:#000000;white-space:pre;font-family:'Liberation Sans', sans-serif;transform:scaleX(1.1548);transform-origin:right top;">21</div>
<div style="left:71.00px;top:647.69px;font-size:11.0px;line-height:13px;color:#000000;white-space:pre;font-family:'Liberation Sans', sans-serif;transform:scaleX(0.9374);transform-origin:left top;">OCTUBRE</div>
<div style="left:224.38px;top:647.69px;font-size:11.0px;line-height:13px;color:#000000;white-space:pre;font-family:'Liberation Sans', sans-serif;transform:scaleX(1.2416);transform-origin:right top;">5/11/2023</div>
<div style="left:277.00px;top:647.69px;font-size:11.0px;line-height:13px;color:#000000;white-space:pre;font-family:'Liberation Sans', sans-serif;transform:scaleX(1.1518);transform-origin:left top;">001-777-218334703</div>
<div style="left:429.56px;top:647.69px;font-size:11.0px;line-height:13px;color:#000000;white-space:pre;font-family:'Liberation Sans', sans-serif;transform:scaleX(1.1548);transform-origin:right top;">22773300</div>
<div style="left:486.50px;top:645.69px;font-size:11.0px;line-height:13px;color:#000000;white-space:pre;font-family:'Liberation Sans', sans-serif;transform:scaleX(1.1047);transform-origin:left top;">$</div>
<div style="left:513.59px;top:646.69px;font-size:11.0px;line-height:13px;color:#000000;white-space:pre;font-family:'Liberation Sans', sans-serif;transform:scaleX(1.1469);transform-origin:right top;">6.94</div>
<div style="left:575.56px;top:647.69px;font-size:11.0px;line-height:13px;color:#000000;white-space:pre;font-family:'Liberation Sans', sans-serif;transform:scaleX(1.1548);transform-origin:right top;">19226101</div>
<div style="left:697.26px;top:647.69px;font-size:11.0px;line-height:13px;color:#000000;white-space:pre;font-family:'Liberation Sans', sans-serif;transform:scaleX(1.2318);transform-origin:right top;">14/11/2023</div>
<div style="left:756.00px;top:647.69px;font-size:11.0px;line-height:13px;color:#000000;white-space:pre;font-family:'Liberation Sans', sans-serif;transform:scaleX(0.9882);transform-origin:left top;">NOVIEMBRE</div>
<div style="left:26px;top:682px;width:807px;height:1px;background:#b4c6e7"></div>
<div style="left:53.76px;top:667.69px;font-size:11.0px;line-height:13px;color:#000000;white-space:pre;font-family:'Liberation Sans', sans-serif;transform:scaleX(1.1548);transform-origin:right top;">22</div>
<div style="left:71.00px;top:667.69px;font-size:11.0px;line-height:13px;color:#000000;white-space:pre;font-family:'Liberation Sans', sans-serif;transform:scaleX(0.9374);transform-origin:left top;">OCTUBRE</div>
<div style="left:224.38px;top:667.69px;font-size:11.0px;line-height:13px;color:#000000;white-space:pre;font-family:'Liberation Sans', sans-serif;transform:scaleX(1.2416);transform-origin:right top;">5/11/2023</div>
<div style="left:277.00px;top:667.69px;font-size:11.0px;line-height:13px;color:#000000;white-space:pre;font-family:'Liberation Sans', sans-serif;transform:scaleX(1.1518);transform-origin:left top;">001-777-218334704</div>
<div style="left:429.56px;top:667.69px;font-size:11.0px;line-height:13px;color:#000000;white-space:pre;font-family:'Liberation Sans', sans-serif;transform:scaleX(1.1548);transform-origin:right top;">22773296</div>
<div style="left:486.50px;top:665.69px;font-size:11.0px;line-height:13px;color:#000000;white-space:pre;font-family:'Liberation Sans', sans-serif;transform:scaleX(1.1047);transform-origin:left top;">$</div>
<div style="left:513.59px;top:666.69px;font-size:11.0px;line-height:13px;color:#000000;white-space:pre;font-family:'Liberation Sans', sans-serif;transform:scaleX(1.1469);transform-origin:right top;">6.94</div>
<div style="left:575.56px;top:667.69px;font-size:11.0px;line-height:13px;color:#000000;white-space:pre;font-family:'Liberation Sans', sans-serif;transform:scaleX(1.1548);transform-origin:right top;">19226101</div>
<div style="left:697.26px;top:667.69px;font-size:11.0px;line-height:13px;color:#000000;white-space:pre;font-family:'Liberation Sans', sans-serif;transform:scaleX(1.2318);transform-origin:right top;">14/11/2023</div>
<div style="left:756.00px;top:667.69px;font-size:11.0px;line-height:13px;color:#000000;white-space:pre;font-family:'Liberation Sans', sans-serif;transform:scaleX(0.9882);transform-origin:left top;">NOVIEMBRE</div>
<div style="left:833px;top:223px;width:1px;height:455px;background:#8eaadb"></div>
<div style="left:1339px;top:203px;width:21px;height:476px;background:#e6e6e6"></div>
<div style="left:1342px;top:205px;width:15px;height:14px;background:#fff;border:1px solid #ababab;box-sizing:border-box"></div>
<svg style="left:1345px;top:209px;" width="9" height="5" viewBox="0 0 9 5"><path d="M0 5 L9 5 L4.5 0 Z" fill="#262626"/></svg>
<div style="left:1342px;top:219px;width:15px;height:446px;background:#ededed"></div>
<div style="left:1342px;top:221px;width:15px;height:360px;background:#fff;border:1px solid #ababab;box-sizing:border-box"></div>
<div style="left:1342px;top:664px;width:15px;height:15px;background:#fff;border:1px solid #ababab;box-sizing:border-box"></div>
<svg style="left:1345px;top:669px;" width="9" height="5" viewBox="0 0 9 5"><path d="M0 0 L9 0 L4.5 5 Z" fill="#262626"/></svg>
<div style="left:0px;top:679px;width:1360px;height:27px;background:#e6e6e6"></div>
<div style="left:0px;top:678px;width:1339px;height:1px;background:#ababab"></div>
<div style="left:100px;top:679px;width:51px;height:24px;background:#ffffff;border-left:1px solid #ababab;border-right:1px solid #ababab;box-sizing:border-box"></div>
<div style="left:100px;top:701px;width:51px;height:2px;background:#217346"></div>
<div style="left:112.00px;top:684.50px;font-size:13px;line-height:16px;color:#217346;font-weight:bold;white-space:pre;font-family:'Liberation Sans', sans-serif;transform:scaleX(0.9731);transform-origin:left top;">CNT</div>
<div style="left:162.00px;top:684.50px;font-size:13px;line-height:16px;color:#444444;white-space:pre;font-family:'Liberation Sans', sans-serif;transform:scaleX(0.8651);transform-origin:left top;">CNEL</div>
<div style="left:205px;top:683px;width:1px;height:18px;background:#c6c6c6"></div>
<svg style="left:238px;top:683px" width="18" height="18" viewBox="0 0 18 18"><circle cx="9" cy="9" r="7.5" fill="none" stroke="#7a7a7a" stroke-width="1.2"/><path d="M9 5 V13 M5 9 H13" stroke="#7a7a7a" stroke-width="1.6"/></svg>
<svg style="left:26px;top:687px;" width="6" height="9" viewBox="0 0 6 9"><path d="M5 0 L0 4.5 L5 9 Z" fill="#c6c6c6"/></svg>
<svg style="left:55px;top:687px;" width="6" height="9" viewBox="0 0 6 9"><path d="M0 0 L5 4.5 L0 9 Z" fill="#c6c6c6"/></svg>
<div style="left:833px;top:685px;width:15px;height:15px;background:#fff;border:1px solid #ababab;box-sizing:border-box"></div>
<svg style="left:838px;top:689px;" width="5" height="8" viewBox="0 0 5 8"><path d="M5 0 L0 4 L5 8 Z" fill="#262626"/></svg>
<div style="left:848px;top:685px;width:476px;height:15px;background:#f0f0f0"></div>
<div style="left:848px;top:685px;width:444px;height:15px;background:#fff;border:1px solid #ababab;box-sizing:border-box"></div>
<div style="left:1324px;top:685px;width:15px;height:15px;background:#fff;border:1px solid #ababab;box-sizing:border-box"></div>
<svg style="left:1329px;top:689px;" width="5" height="8" viewBox="0 0 5 8"><path d="M0 0 L5 4 L0 8 Z" fill="#262626"/></svg>
<div style="left:816px;top:688px;width:2px;height:2px;background:#a0a0a0"></div>
<div style="left:816px;top:692px;width:2px;height:2px;background:#a0a0a0"></div>
<div style="left:816px;top:696px;width:2px;height:2px;background:#a0a0a0"></div>
<div style="left:0px;top:706px;width:1360px;height:22px;background:#f3f3f3;border-top:1px solid #dadada;box-sizing:border-box"></div>
<div style="left:11.00px;top:710.84px;font-size:12px;line-height:14px;color:#444444;white-space:pre;font-family:'Liberation Sans', sans-serif;transform:scaleX(0.9074);transform-origin:left top;">Listo</div>
<div style="left:72.00px;top:710.84px;font-size:12px;line-height:14px;color:#444444;white-space:pre;font-family:'Liberation Sans', sans-serif;transform:scaleX(0.9677);transform-origin:left top;">Accesibilidad: todo correcto</div>
<div style="left:763.00px;top:710.84px;font-size:12px;line-height:14px;color:#444444;white-space:pre;font-family:'Liberation Sans', sans-serif;transform:scaleX(0.9155);transform-origin:left top;">Promedio: 19312293</div>
<div style="left:884.00px;top:710.84px;font-size:12px;line-height:14px;color:#444444;white-space:pre;font-family:'Liberation Sans', sans-serif;transform:scaleX(0.9117);transform-origin:left top;">Recuento: 2</div>
<div style="left:959.00px;top:710.84px;font-size:12px;line-height:14px;color:#444444;white-space:pre;font-family:'Liberation Sans', sans-serif;transform:scaleX(0.9080);transform-origin:left top;">Suma: 38624586</div>
<div style="left:1060px;top:706px;width:40px;height:22px;background:#d4d4d4"></div>
<div style="left:1326.00px;top:710.84px;font-size:12px;line-height:14px;color:#444444;white-space:pre;font-family:'Liberation Sans', sans-serif;transform:scaleX(0.8797);transform-origin:left top;">100%</div>
<div style="left:0px;top:728px;width:1360px;height:40px;background:#101010"></div>
<div style="left:48px;top:728px;width:344px;height:40px;background:#f2f2f2;border:1px solid #dadada;box-sizing:border-box"></div>
<div style="left:88.00px;top:739.80px;font-size:15px;line-height:18px;color:#1a1a1a;white-space:pre;font-family:'Liberation Sans', sans-serif;transform:scaleX(0.9595);transform-origin:left top;">Escribe aquí para buscar</div>
<div style="left:640px;top:728px;width:48px;height:40px;background:#333333"></div>
<div style="left:1215.00px;top:741.84px;font-size:12px;line-height:14px;color:#ffffff;white-space:pre;font-family:'Liberation Sans', sans-serif;transform:scaleX(0.7496);transform-origin:left top;">ESP</div>
<div style="left:1261.00px;top:732.84px;font-size:12px;line-height:14px;color:#ffffff;white-space:pre;font-family:'Liberation Sans', sans-serif;transform:scaleX(0.8991);transform-origin:left top;">09:46</div>
<div style="left:1246.00px;top:750.84px;font-size:12px;line-height:14px;color:#ffffff;white-space:pre;font-family:'Liberation Sans', sans-serif;transform:scaleX(0.9657);transform-origin:left top;">26/12/2023</div>
<svg style="left:21px;top:10px;" width="16" height="14" viewBox="0 0 16 14">
<path d="M1 1 H15 V13 H1 Z" fill="none" stroke="#fff" stroke-width="1.6"/>
<rect x="3.5" y="1.5" width="9" height="5" fill="#217346"/>
<rect x="1" y="7" width="14" height="6.5" fill="#fff"/>
<rect x="4" y="9" width="8" height="4.5" fill="#217346"/>
<rect x="6.5" y="10" width="3" height="3.5" fill="#fff"/>
</svg>
<svg style="left:50px;top:9px;" width="17" height="15" viewBox="0 0 17 15"><path d="M3 5.5 H9.5 A4.5 4.5 0 0 1 9.5 14.5 H7" fill="none" stroke="#6fa888" stroke-width="2"/><path d="M6.5 1.5 L2.5 5.5 L6.5 9.5" fill="none" stroke="#6fa888" stroke-width="2"/></svg>
<svg style="left:71px;top:14px;" width="8" height="5" viewBox="0 0 8 5"><path d="M1 1 L3.5 3.5 L6 1" fill="none" stroke="#6fa888" stroke-width="1.2"/></svg>
<svg style="left:89px;top:9px;" width="17" height="15" viewBox="0 0 17 15"><path d="M13.5 5.5 H7 A4.5 4.5 0 0 0 7 14.5 H9.5" fill="none" stroke="#6fa888" stroke-width="2"/><path d="M10 1.5 L14 5.5 L10 9.5" fill="none" stroke="#6fa888" stroke-width="2"/></svg>
<svg style="left:110px;top:14px;" width="8" height="5" viewBox="0 0 8 5"><path d="M1 1 L3.5 3.5 L6 1" fill="none" stroke="#6fa888" stroke-width="1.2"/></svg>
<svg style="left:129px;top:8px;" width="17" height="19" viewBox="0 0 17 19">
<path d="M1.5 1 H9 L12.5 4.5 V8 M1.5 1 V17.5 H6" fill="none" stroke="#fff" stroke-width="1.3"/>
<path d="M9 1 V4.5 H12.5" fill="none" stroke="#fff" stroke-width="1"/>
<circle cx="8.5" cy="12" r="3.6" fill="none" stroke="#fff" stroke-width="1.6"/>
<path d="M11 14.5 L14.5 18" stroke="#fff" stroke-width="2.2"/>
</svg>
<svg style="left:161px;top:13px;" width="8" height="8" viewBox="0 0 8 8"><rect x="0.5" y="0.5" width="6" height="1.4" fill="#fff"/><path d="M0.5 3.5 H6.5 L3.5 6.8 Z" fill="#fff"/></svg>
<svg style="left:1140px;top:5px;" width="24" height="24" viewBox="0 0 24 24">
<defs><clipPath id="av"><circle cx="12" cy="12" r="11.7"/></clipPath></defs>
<g clip-path="url(#av)">
<rect x="0" y="0" width="24" height="24" fill="#1a8cf0"/>
<rect x="4" y="1" width="4" height="1.2" fill="#d8ecff"/><rect x="10" y="1" width="5" height="1.2" fill="#d8ecff"/>
<path d="M0 10 Q5 8 9 10 L12 9 Q17 7 24 10 V17 H0 Z" fill="#8cc63f"/>
<path d="M0 11 Q3 9.5 6 12 L5 16 H0 Z" fill="#d6b83a"/>
<path d="M9 4 L11 3 L12 6 L13.5 9 L11 10 L9.5 8 Z" fill="#e8cf4a"/>
<path d="M16 7 L19 6 L21 9 L18 10 Z" fill="#2f6b3a"/>
<path d="M4 10 L6 9 L7 14 L5 14 Z" fill="#2c5a2a"/>
<path d="M10 12 H16 L15 17 H9 Z" fill="#3b82c8"/>
<path d="M0 16 H24 V18 H0 Z" fill="#a8b84a"/>
<rect x="0" y="18" width="24" height="6" fill="#f6f6f6"/>
<rect x="8" y="19" width="1.3" height="3" fill="#5a2e20"/><rect x="10" y="19" width="2" height="3" fill="#8a4a30"/><rect x="12.5" y="19" width="2" height="3" fill="#5a2e20"/><rect x="15" y="19.5" width="1.5" height="2" fill="#8a4a30"/>
</g></svg>
<svg style="left:1191px;top:9px;" width="16" height="13" viewBox="0 0 16 13"><rect x="1.5" y="1.5" width="12" height="10" fill="none" stroke="#fff" stroke-width="1"/><path d="M1.5 3.5 H13.5" stroke="#fff" stroke-width="1"/><path d="M7.5 11 V6 M5.5 8 L7.5 6 L9.5 8" fill="none" stroke="#fff" stroke-width="1"/></svg>
<div style="left:1240px;top:14px;width:10px;height:1px;background:#fff"></div>
<svg style="left:1285px;top:9px;" width="13" height="13" viewBox="0 0 13 13"><path d="M1.5 4.5 H8.5 V11.5 H1.5 Z" fill="none" stroke="#fff" stroke-width="1"/><path d="M3.5 4.5 V2.5 H10.5 V9.5 H8.5" fill="none" stroke="#fff" stroke-width="1"/></svg>
<svg style="left:1331px;top:9px;" width="12" height="12" viewBox="0 0 12 12"><path d="M1 1 L11 11 M11 1 L1 11" stroke="#fff" stroke-width="1.1"/></svg>
<svg style="left:1328px;top:40px;" width="18" height="17" viewBox="0 0 18 17"><path d="M1.5 1.5 H16.5 V11.5 H5.5 L2.5 14.5 V11.5 H1.5 Z" fill="none" stroke="#fff" stroke-width="1"/></svg>
<svg style="left:786px;top:40px;" width="14" height="18" viewBox="0 0 14 18"><path d="M4.5 11.5 C1 9 1.5 1.5 7 1.5 C12.5 1.5 13 9 9.5 11.5 V13 H4.5 Z" fill="none" stroke="#fff" stroke-width="1.1"/><path d="M4.5 14.5 H9.5 M5.5 16.5 H8.5" stroke="#fff" stroke-width="1"/></svg>
<svg style="left:93px;top:177px;" width="8" height="5" viewBox="0 0 8 5"><path d="M0 0 H8 L4 5 Z" fill="#6e6e6e"/></svg>
<div style="left:121px;top:175px;width:2px;height:2px;background:#9a9a9a"></div>
<div style="left:121px;top:179px;width:2px;height:2px;background:#9a9a9a"></div>
<div style="left:121px;top:183px;width:2px;height:2px;background:#9a9a9a"></div>
<svg style="left:150px;top:174px;" width="13" height="13" viewBox="0 0 13 13"><path d="M1.5 2 L10.5 11 M10.5 2 L1.5 11" stroke="#c4c4c4" stroke-width="1.5"/></svg>
<svg style="left:185px;top:174px;" width="15" height="13" viewBox="0 0 15 13"><path d="M1.5 6.5 L5 10.5 L12.5 2" fill="none" stroke="#c4c4c4" stroke-width="2.2"/></svg>
<div style="left:222.00px;top:171.65px;font-size:14px;line-height:17px;color:#666;font-weight:bold;white-space:pre;font-family:'Liberation Sans', sans-serif;font-style:italic;font-family:'Liberation Serif',serif;">f</div>
<div style="left:228.00px;top:174.53px;font-size:10px;line-height:12px;color:#666;font-weight:bold;white-space:pre;font-family:'Liberation Sans', sans-serif;font-style:italic;font-family:'Liberation Serif',serif;">x</div>
<svg style="left:1342px;top:177px;" width="9" height="6" viewBox="0 0 9 6"><path d="M1 1 L4.5 4.5 L8 1" fill="none" stroke="#6e6e6e" stroke-width="1.6"/></svg>
<svg style="left:50px;top:708px;" width="22" height="18" viewBox="0 0 22 18">
<path d="M7.5 3.5 A6 6 0 0 0 9.5 14.5" fill="none" stroke="#444" stroke-width="1.3" stroke-dasharray="2.2 1.2"/>
<path d="M10.5 2 V7" stroke="#444" stroke-width="1.2"/><path d="M8 6.2 H13 L10.5 9 Z" fill="#444"/>
<path d="M12 7.3 H15" stroke="#444" stroke-width="1.2"/><path d="M14.5 5 V9.6 L17.3 7.3 Z" fill="#444"/>
<path d="M12.5 12.3 L15 15.5 L19.8 9.6" fill="none" stroke="#444" stroke-width="1.8"/>
</svg>
<svg style="left:1072px;top:710px;" width="15" height="14" viewBox="0 0 15 14"><path d="M1.5 1.5 H13.5 V12.5 H1.5 Z M1.5 5.2 H13.5 M1.5 8.8 H13.5 M5.5 1.5 V12.5 M9.5 1.5 V12.5" fill="none" stroke="#6e6e6e" stroke-width="1"/></svg>
<svg style="left:1112px;top:709px;" width="16" height="15" viewBox="0 0 16 15"><rect x="1.5" y="1.5" width="13" height="12" fill="none" stroke="#6e6e6e" stroke-width="1"/><rect x="4.5" y="3.5" width="7" height="8" fill="none" stroke="#6e6e6e" stroke-width="1"/><path d="M6 5.5 H10 M6 7.5 H10 M6 9.5 H10" stroke="#6e6e6e" stroke-width="1"/></svg>
<svg style="left:1152px;top:709px;" width="16" height="15" viewBox="0 0 16 15"><path d="M1.5 1.5 H14.5 V13.5 H1.5 Z M1.5 8.5 H8.5 V1.5 M5 1.5 V8.5" fill="none" stroke="#6e6e6e" stroke-width="1"/></svg>
<div style="left:1186px;top:716px;width:8px;height:1px;background:#555"></div>
<div style="left:1199px;top:716px;width:100px;height:1px;background:#6e6e6e"></div>
<div style="left:1247px;top:712px;width:5px;height:11px;background:#555"></div>
<div style="left:1303px;top:716px;width:9px;height:1px;background:#555"></div>
<div style="left:1307px;top:712px;width:1px;height:9px;background:#555"></div>
<svg style="left:16px;top:740px;" width="17" height="17" viewBox="0 0 17 17"><path d="M0 2.3 L6.8 1.4 V8 H0 Z M7.8 1.25 L16.5 0 V8 H7.8 Z M0 9 H6.8 V15.6 L0 14.7 Z M7.8 9 H16.5 V17 L7.8 15.75 Z" fill="#fff"/></svg>
<svg style="left:59px;top:739px;" width="19" height="19" viewBox="0 0 19 19"><circle cx="11" cy="7.5" r="5.5" fill="none" stroke="#1a1a1a" stroke-width="1.2"/><path d="M7 11.5 L1 17.5" stroke="#1a1a1a" stroke-width="1.3"/></svg>
<svg style="left:312px;top:729px;" width="80" height="39" viewBox="0 0 80 39">
<defs><radialGradient id="glow" cx="0.56" cy="0.5" r="0.62"><stop offset="0" stop-color="#f5a93c"/><stop offset="0.3" stop-color="#f6c890"/><stop offset="0.6" stop-color="#f3dde2"/><stop offset="1" stop-color="#f2f2f2"/></radialGradient>
<linearGradient id="tr" x1="0" y1="0" x2="0" y2="1"><stop offset="0" stop-color="#8a86b0"/><stop offset="1" stop-color="#8d9ac8"/></linearGradient></defs>
<rect x="0" y="0" width="80" height="39" fill="url(#glow)"/>
<path d="M17 39 V25 L22 22 L26 15 L31 17 L34 22 L38 20 L42 17 L46 22 L50 20 L55 22 L59 15 L64 18 L68 23 L75 23 L80 25 V39 Z" fill="url(#tr)"/>
<path d="M5 39 V31 H80 V39 Z" fill="#7d8cc4"/>
<path d="M30 39 Q38 30 50 27 M40 39 Q44 31 52 27" fill="none" stroke="#b89cb8" stroke-width="2.5"/>
<path d="M7 39 V26 M29 39 V27 M57 39 V26 M79 39 V26" stroke="#3d4878" stroke-width="2.2"/>
<path d="M7 29 H29 M7 32.5 H29 M7 35.5 H29 M57 29 H80 M57 32.5 H80 M57 35.5 H80" stroke="#4a5587" stroke-width="1.2"/>
</svg>
<svg style="left:404px;top:733px;" width="30" height="30" viewBox="0 0 30 30">
<defs><linearGradient id="eg1" x1="0" y1="0.2" x2="1" y2="0.7"><stop offset="0" stop-color="#2fb6f0"/><stop offset="0.5" stop-color="#2cc8c0"/><stop offset="1" stop-color="#6ae05a"/></linearGradient>
<linearGradient id="eg2" x1="0" y1="0" x2="0.6" y2="1"><stop offset="0" stop-color="#1f92e6"/><stop offset="1" stop-color="#1558b0"/></linearGradient></defs>
<circle cx="15" cy="15" r="12" fill="url(#eg1)"/>
<path d="M3.2 12.5 C5 9 10 8.2 13.5 10.5 C10.5 11.5 9.5 14.5 10.8 17.8 C12.8 22 19 23.2 25.3 21.2 C22.5 25.5 18.8 27 15 27 C8.4 27 3 21.6 3 15 C3 14 3.1 13.2 3.2 12.5 Z" fill="url(#eg2)"/>
<path d="M12 14 C12.5 11.5 16.5 11 17.5 14.5 C18.5 18 22 19.8 26.2 19.2 L25.6 20.8 C20 22.6 14 21.5 12.3 17.5 C11.8 16.3 11.8 15 12 14 Z" fill="#101010"/>
</svg>
<svg style="left:455px;top:735px;" width="26" height="26" viewBox="0 0 26 26">
<circle cx="13" cy="13" r="12" fill="#db4437"/>
<path d="M13 13 L23.39 7.00 A12 12 0 0 1 13 25 Z" fill="#fbc02d"/>
<path d="M13 13 L13 25 A12 12 0 0 1 2.61 7.00 Z" fill="#0f9d58"/>
<circle cx="13" cy="13" r="5.52" fill="#fff"/>
<circle cx="13" cy="13" r="4.32" fill="#3b7be8"/></svg>
<svg style="left:505px;top:737px;" width="24" height="21" viewBox="0 0 24 21">
<path d="M1 2 H9 L11 4 H23 V20 H1 Z" fill="#e8b43c"/>
<rect x="1" y="5" width="22" height="15" fill="#f8d775"/>
<path d="M5 20 V12 H19 V20 H15 V16 H9 V20 Z" fill="#3c8bd9"/>
</svg>
<div style="left:497px;top:766px;width:40px;height:2px;background:#76b9ed"></div>
<svg style="left:553px;top:735px;" width="26" height="26" viewBox="0 0 26 26">
<defs><radialGradient id="ff" cx="0.5" cy="0.2" r="0.9"><stop offset="0" stop-color="#ffe14a"/><stop offset="0.45" stop-color="#ff8a1f"/><stop offset="1" stop-color="#f5145c"/></radialGradient></defs>
<path d="M13 25 A11.5 11.5 0 0 1 2.5 9 C3 11 4 12 5 12 C5 8 7 5 9 4 C9 6 10 7 12 7 C12 4 14 2 16 1 C17 4 20 5 22 8 C25 12 25 17 22 21 C20 23.5 16.5 25 13 25 Z" fill="url(#ff)"/>
<circle cx="13" cy="14" r="5.5" fill="#7a3fd0"/>
<path d="M8 12 C10 9 15 9 16 12" fill="none" stroke="#ff9a2a" stroke-width="2"/>
</svg>
<svg style="left:602px;top:736px;" width="27" height="24" viewBox="0 0 27 24">
<rect x="7" y="1" width="18" height="21" rx="1" fill="#2b7cd3"/>
<rect x="7" y="1" width="18" height="5" fill="#41a5ee"/>
<rect x="7" y="11" width="18" height="6" fill="#185abd"/>
<rect x="7" y="17" width="18" height="5" fill="#103f91"/>
<rect x="1" y="6" width="12" height="12" rx="1" fill="#185abd"/>
<text x="2" y="16" font-family="Liberation Sans" font-size="11" font-weight="bold" fill="#fff">W</text>
</svg>
<svg style="left:651px;top:736px;" width="27" height="24" viewBox="0 0 27 24">
<rect x="7" y="1" width="19" height="21" rx="1" fill="#21a366"/>
<rect x="16" y="1" width="10" height="5" fill="#33c481"/>
<rect x="7" y="11" width="19" height="6" fill="#107c41"/>
<rect x="7" y="17" width="19" height="5" fill="#185c37"/>
<rect x="1" y="6" width="12" height="12" rx="1" fill="#107c41"/>
<text x="3" y="16" font-family="Liberation Sans" font-size="11" font-weight="bold" fill="#fff">X</text>
</svg>
<div style="left:640px;top:766px;width:48px;height:2px;background:#76b9ed"></div>
<svg style="left:700px;top:735px;" width="28" height="28" viewBox="0 0 28 28">
<circle cx="13" cy="13" r="11.5" fill="#db4437"/>
<path d="M13 13 L22.96 7.25 A11.5 11.5 0 0 1 13 24.5 Z" fill="#fbc02d"/>
<path d="M13 13 L13 24.5 A11.5 11.5 0 0 1 3.04 7.25 Z" fill="#0f9d58"/>
<circle cx="13" cy="13" r="5.29" fill="#fff"/>
<circle cx="13" cy="13" r="4.14" fill="#3b7be8"/><circle cx="19.5" cy="19" r="7" fill="#dfe4ea"/><rect x="17" y="14" width="5" height="10" fill="#b59a7a"/><path d="M13 24 H26 V26 H13 Z" fill="#3fb8a8"/></svg>
<div style="left:693px;top:766px;width:40px;height:2px;background:#76b9ed"></div>
<svg style="left:751px;top:737px;" width="22" height="21" viewBox="0 0 22 21"><rect x="0.5" y="0.5" width="20.5" height="20.5" rx="3" fill="#c4180e"/><path d="M10.5 4 C9 4 9.5 8 11 11 C12.5 14 15 16 17 15.5 C18.5 15 16.5 13 12.5 13.5 C8 14 5 16 5 17 C5 18 7 17.5 9 14 C10.5 11 12 4.5 10.5 4 Z" fill="none" stroke="#fff" stroke-width="1.4"/></svg>
<div style="left:742px;top:766px;width:31px;height:2px;background:#76b9ed"></div>
<div style="left:773px;top:766px;width:9px;height:2px;background:#5a8bb8"></div>
<svg style="left:797px;top:735px;" width="28" height="28" viewBox="0 0 28 28">
<path d="M13 4 C20 3 26 7 25 12 C24 16 19 15 18 18 C17 22 13 25 8 23 C3 21 2 15 4 10 C5.5 6 9 4.5 13 4 Z" fill="#cfe5f2"/>
<circle cx="8" cy="14" r="1.8" fill="#e04a3a"/><circle cx="11" cy="9.5" r="1.8" fill="#5dbb4a"/><circle cx="16" cy="8" r="1.8" fill="#f2c230"/>
<circle cx="13" cy="17" r="1.5" fill="#101010"/>
<path d="M24 3 L15 24" stroke="#e29a3a" stroke-width="2.2"/>
<path d="M22 4 L25 1 L27 3 L24.5 6 Z" fill="#d9b07a"/>
</svg>
<div style="left:791px;top:766px;width:40px;height:2px;background:#76b9ed"></div>
<svg style="left:1116px;top:743px;" width="14" height="9" viewBox="0 0 14 9"><path d="M1 8 L7 2 L13 8" fill="none" stroke="#fff" stroke-width="1.2"/></svg>
<svg style="left:1141px;top:739px;" width="14" height="18" viewBox="0 0 14 18"><path d="M3 3 Q7 0 11 3 M3 15 Q7 18 11 15" fill="none" stroke="#ccc" stroke-width="1"/><rect x="2" y="5" width="8" height="8" rx="2" fill="none" stroke="#fff" stroke-width="1.2"/><path d="M10 7.5 L13 5.5 V12.5 L10 10.5" fill="none" stroke="#fff" stroke-width="1.1"/></svg>
<svg style="left:1162px;top:739px;" width="18" height="18" viewBox="0 0 18 18"><rect x="4.5" y="3.5" width="12" height="9" fill="none" stroke="#fff" stroke-width="1.1"/><path d="M10.5 12.5 V15.5 M7 15.5 H14" stroke="#fff" stroke-width="1.1"/><rect x="1.5" y="1.5" width="4" height="4" fill="#101010" stroke="#fff" stroke-width="1"/><path d="M3.5 5.5 V13" stroke="#fff" stroke-width="1"/></svg>
<svg style="left:1186px;top:739px;" width="18" height="18" viewBox="0 0 18 18"><path d="M1.5 6.5 H4.5 L8.5 2.5 V15.5 L4.5 11.5 H1.5 Z" fill="none" stroke="#fff" stroke-width="1.1"/><path d="M11 6 Q12.5 9 11 12 M13.5 4 Q16 9 13.5 14 M16 2 Q19.5 9 16 16" fill="none" stroke="#bbb" stroke-width="1"/></svg>
<svg style="left:1318px;top:739px;" width="19" height="18" viewBox="0 0 19 18"><path d="M1.5 1.5 H17.5 V12.5 H11.5 L9.5 15 L7.5 12.5 H1.5 Z" fill="none" stroke="#fff" stroke-width="1.1"/></svg>
<div style="left:1356px;top:728px;width:1px;height:40px;background:#555"></div>
<div style="left:1030.00px;top:650.76px;font-size:18px;line-height:22px;color:rgba(150,150,150,0.55);white-space:pre;font-family:'Liberation Sans', sans-serif;transform:scaleX(1.0975);transform-origin:left top;">Activar Windows</div>
<div style="left:1030.00px;top:675.65px;font-size:14px;line-height:17px;color:rgba(150,150,150,0.55);white-space:pre;font-family:'Liberation Sans', sans-serif;transform:scaleX(1.0542);transform-origin:left top;">Ve a Configuración para activar Windows.</div>
</body></html>
